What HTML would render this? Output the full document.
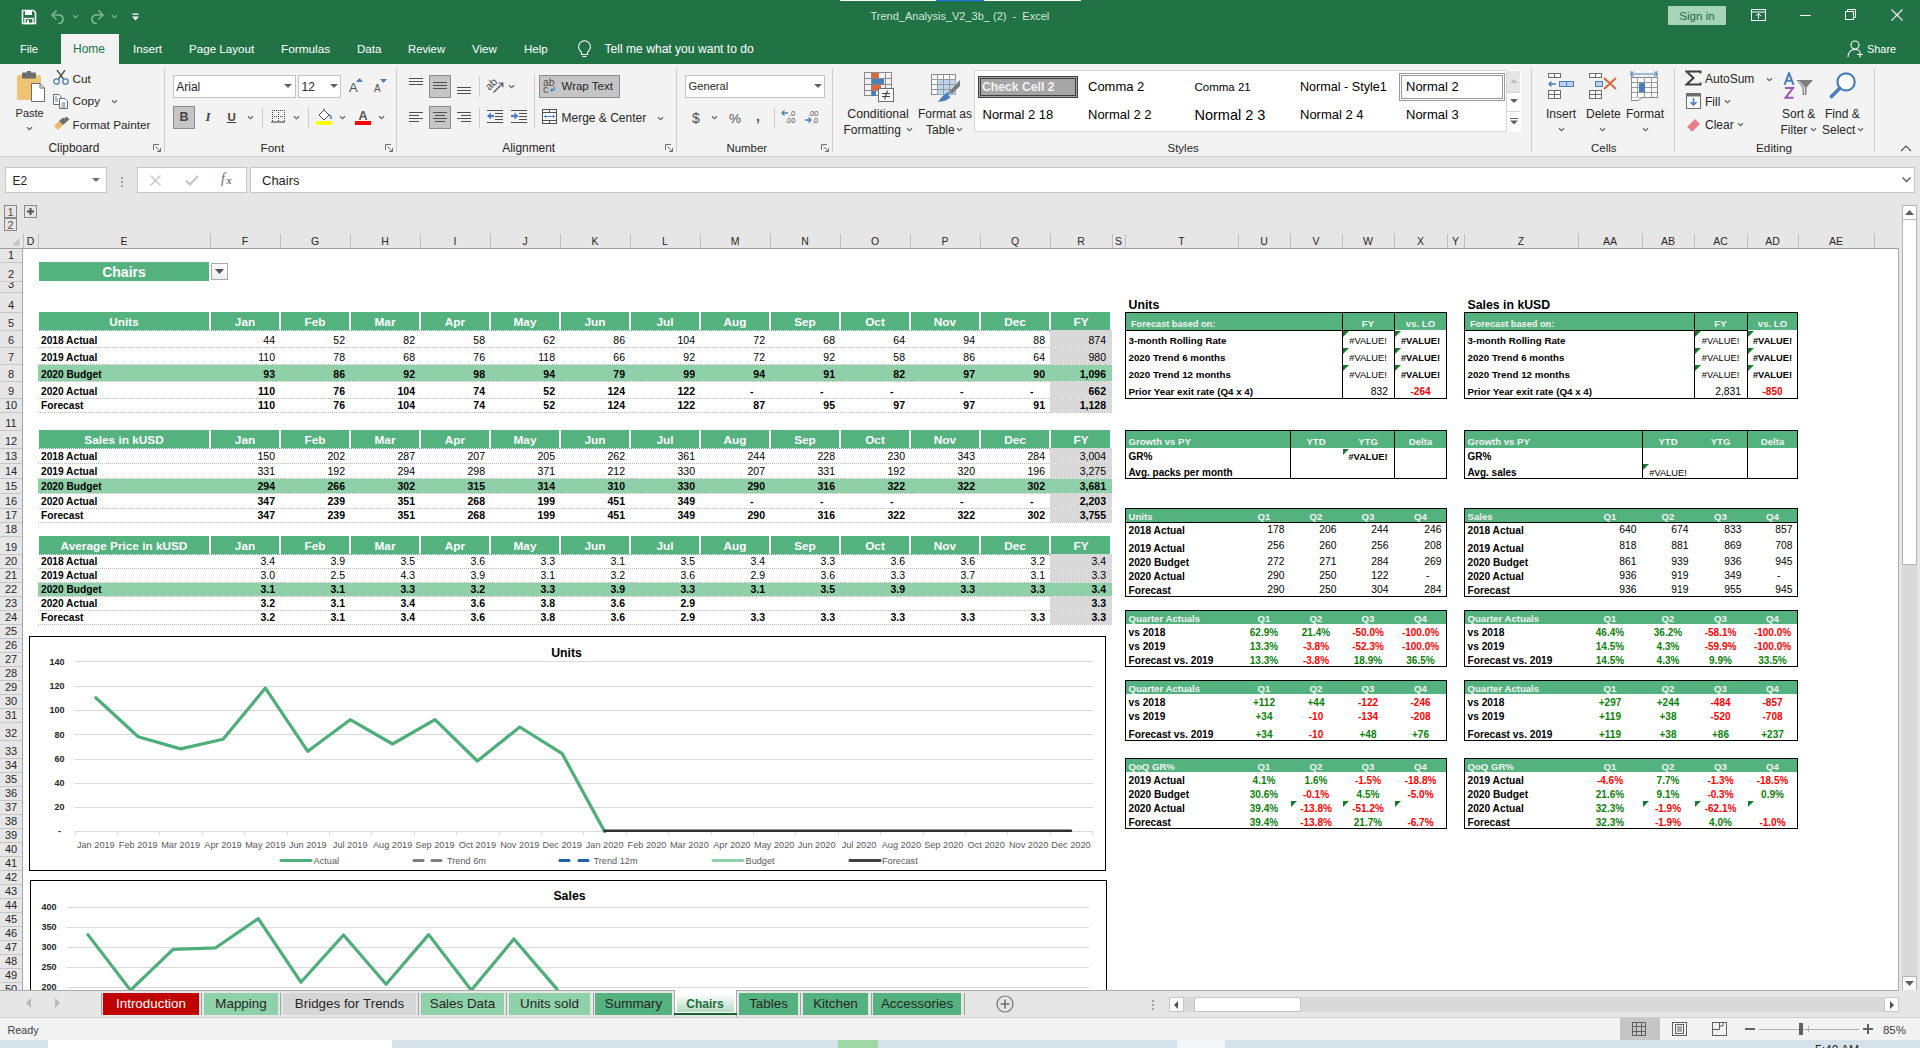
<!DOCTYPE html><html><head><meta charset="utf-8"><style>
*{margin:0;padding:0;box-sizing:border-box}
html,body{width:1920px;height:1048px;overflow:hidden;background:#fff;font-family:"Liberation Sans", sans-serif;}
body>div,body>svg,div>div{position:absolute}
</style></head><body>
<div style="left:0px;top:0px;width:1920px;height:64px;background:#217346"></div>
<div style="left:840px;top:0px;width:241px;height:1px;background:#ffffff"></div>
<div style="left:936px;top:0px;width:48px;height:1px;background:#1a73e8"></div>
<svg style="left:21px;top:9px;" width="16" height="16" viewBox="0 0 16 16"><path d="M1.5 1.5 H12.5 L14.5 3.5 V14.5 H1.5 Z" fill="none" stroke="#fff" stroke-width="1.6"/><rect x="4" y="2" width="7" height="4" fill="#fff"/><rect x="4" y="9.5" width="8" height="5" fill="none" stroke="#fff" stroke-width="1.4"/><rect x="6" y="11" width="2" height="3" fill="#fff"/></svg>
<svg style="left:50px;top:9px;" width="16" height="15" viewBox="0 0 16 15"><path d="M3 6 H10 A4.5 4.5 0 0 1 10 14.5 H8" fill="none" stroke="#7db797" stroke-width="1.6"/><path d="M6.5 1.5 L2 6 L6.5 10.5" fill="none" stroke="#7db797" stroke-width="1.6"/></svg>
<svg style="left:71.5px;top:13.5px;" width="7.0" height="5.0" viewBox="0 0 7.0 5.0"><path d="M1 1.25 L3.5 3.75 L6.0 1.25" fill="none" stroke="#7db797" stroke-width="1.1"/></svg>
<svg style="left:89px;top:9px;" width="16" height="15" viewBox="0 0 16 15"><path d="M13 6 H6 A4.5 4.5 0 0 0 6 14.5 H8" fill="none" stroke="#7db797" stroke-width="1.6"/><path d="M9.5 1.5 L14 6 L9.5 10.5" fill="none" stroke="#7db797" stroke-width="1.6"/></svg>
<svg style="left:110.5px;top:13.5px;" width="7.0" height="5.0" viewBox="0 0 7.0 5.0"><path d="M1 1.25 L3.5 3.75 L6.0 1.25" fill="none" stroke="#7db797" stroke-width="1.1"/></svg>
<svg style="left:132px;top:13px;" width="8" height="9" viewBox="0 0 8 9"><rect x="0.5" y="0.5" width="6" height="1.3" fill="#fff"/><path d="M0 3.5 H7 L3.5 7.5 Z" fill="#fff"/></svg>
<div style="left:870.5px;top:10px;font-size:11px;line-height:12px;font-weight:400;color:#d3e8da;white-space:nowrap;">Trend_Analysis_V2_3b_ (2)&nbsp; -&nbsp; Excel</div>
<div style="left:1668px;top:6px;width:58px;height:19px;background:#a7d3b8;border-radius:1px"></div>
<div style="left:1397.0px;width:600px;text-align:center;top:10px;font-size:11.6px;line-height:12px;font-weight:400;color:#1e6b41;white-space:nowrap;">Sign in</div>
<svg style="left:1751px;top:9px;" width="16" height="13" viewBox="0 0 16 13"><rect x="0.5" y="0.5" width="14" height="11" fill="none" stroke="#fff" stroke-width="1"/><path d="M0.5 3 H14.5" stroke="#fff" stroke-width="1"/><path d="M7.5 10 V4.5 M5 7 L7.5 4.5 L10 7" fill="none" stroke="#fff" stroke-width="1"/></svg>
<div style="left:1800px;top:15px;width:11px;height:1px;background:#fff"></div>
<svg style="left:1845px;top:9px;" width="12" height="12" viewBox="0 0 12 12"><rect x="0.5" y="2.5" width="8" height="8" fill="none" stroke="#fff" stroke-width="1"/><path d="M2.5 2.5 V0.5 H10.5 V8.5 H8.5" fill="none" stroke="#fff" stroke-width="1"/></svg>
<svg style="left:1891px;top:9px;" width="12" height="12" viewBox="0 0 12 12"><path d="M0.5 0.5 L11.5 11.5 M11.5 0.5 L0.5 11.5" stroke="#fff" stroke-width="1.1"/></svg>
<div style="left:61px;top:34px;width:58px;height:30px;background:#f3f3f3"></div>
<div style="left:20px;top:43px;font-size:11.2px;line-height:12px;font-weight:400;color:#ffffff;white-space:nowrap;">File</div>
<div style="left:73px;top:42px;font-size:12px;line-height:14px;font-weight:400;color:#217346;white-space:nowrap;">Home</div>
<div style="left:133px;top:43px;font-size:11.6px;line-height:12px;font-weight:400;color:#ffffff;white-space:nowrap;">Insert</div>
<div style="left:189px;top:43px;font-size:11.6px;line-height:12px;font-weight:400;color:#ffffff;white-space:nowrap;">Page Layout</div>
<div style="left:281px;top:42px;font-size:11.8px;line-height:14px;font-weight:400;color:#ffffff;white-space:nowrap;">Formulas</div>
<div style="left:357px;top:43px;font-size:11.6px;line-height:12px;font-weight:400;color:#ffffff;white-space:nowrap;">Data</div>
<div style="left:408px;top:43px;font-size:11.3px;line-height:12px;font-weight:400;color:#ffffff;white-space:nowrap;">Review</div>
<div style="left:472px;top:43px;font-size:11.5px;line-height:12px;font-weight:400;color:#ffffff;white-space:nowrap;">View</div>
<div style="left:524px;top:43px;font-size:11.5px;line-height:12px;font-weight:400;color:#ffffff;white-space:nowrap;">Help</div>
<svg style="left:577px;top:40px;" width="15" height="18" viewBox="0 0 15 18"><path d="M4.5 12.5 C3 10.5 1.5 9 1.5 6.8 A6 6 0 0 1 13.5 6.8 C13.5 9 12 10.5 10.5 12.5 V14.5 H4.5 Z" fill="none" stroke="#fff" stroke-width="1.1"/><path d="M5.5 16.5 H9.5" stroke="#fff" stroke-width="1.1"/></svg>
<div style="left:604.5px;top:42px;font-size:12.1px;line-height:14px;font-weight:400;color:#ffffff;white-space:nowrap;">Tell me what you want to do</div>
<svg style="left:1847px;top:40px;" width="17" height="18" viewBox="0 0 17 18"><circle cx="8" cy="5" r="4" fill="none" stroke="#fff" stroke-width="1.1"/><path d="M1 17 C1.5 11 4 9.5 8 9.5 C10 9.5 11.5 10 12.5 11" fill="none" stroke="#fff" stroke-width="1.1"/><path d="M13 11.5 V17.5 M10 14.5 H16" stroke="#fff" stroke-width="1.1"/></svg>
<div style="left:1867px;top:43px;font-size:10.9px;line-height:12px;font-weight:400;color:#ffffff;white-space:nowrap;">Share</div>
<div style="left:0px;top:64px;width:1920px;height:92px;background:#f3f3f3"></div>
<div style="left:0px;top:156px;width:1920px;height:1px;background:#d4d4d4"></div>
<svg style="left:15px;top:71px;" width="31" height="32" viewBox="0 0 31 32"><rect x="2" y="4" width="24" height="25" rx="2" fill="#eec376"/><rect x="7" y="1.5" width="14" height="6" rx="1" fill="#6d6d6d"/><rect x="12" y="0" width="4" height="3" fill="#6d6d6d"/><path d="M16.5 12.5 H25 L29.5 17 V30.5 H16.5 Z" fill="#fff" stroke="#6d6d6d" stroke-width="1"/><path d="M25 12.5 V17 H29.5" fill="none" stroke="#6d6d6d" stroke-width="1"/></svg>
<div style="left:15.6px;top:107px;font-size:11.0px;line-height:12px;font-weight:400;color:#262626;white-space:nowrap;">Paste</div>
<svg style="left:25.5px;top:125.5px;" width="7.0" height="5.0" viewBox="0 0 7.0 5.0"><path d="M1 1.25 L3.5 3.75 L6.0 1.25" fill="none" stroke="#606060" stroke-width="1.1"/></svg>
<svg style="left:53px;top:70px;" width="16" height="15" viewBox="0 0 16 15"><path d="M4 0 L10.5 9 M12 0 L5.5 9" stroke="#505050" stroke-width="1.4"/><circle cx="3.5" cy="11.5" r="2.7" fill="none" stroke="#4a7ebb" stroke-width="1.3"/><circle cx="12.5" cy="11.5" r="2.7" fill="none" stroke="#4a7ebb" stroke-width="1.3"/></svg>
<div style="left:72.5px;top:72px;font-size:11.8px;line-height:14px;font-weight:400;color:#262626;white-space:nowrap;">Cut</div>
<svg style="left:53px;top:94px;" width="16" height="15" viewBox="0 0 16 15"><path d="M0.5 0.5 H6 L8 2.5 V10.5 H0.5 Z" fill="#fff" stroke="#6d6d6d" stroke-width="1"/><path d="M6.5 4.5 H12 L14.5 7 V14.5 H6.5 Z" fill="#fff" stroke="#6d6d6d" stroke-width="1"/><path d="M2 3 H4 M2 5 H5 M2 7 H5 M8.5 9 H12.5 M8.5 11 H12.5 M8.5 13 H12.5" stroke="#4a7ebb" stroke-width="1"/></svg>
<div style="left:72.5px;top:94px;font-size:11.8px;line-height:14px;font-weight:400;color:#262626;white-space:nowrap;">Copy</div>
<svg style="left:110.5px;top:98.5px;" width="7.0" height="5.0" viewBox="0 0 7.0 5.0"><path d="M1 1.25 L3.5 3.75 L6.0 1.25" fill="none" stroke="#606060" stroke-width="1.1"/></svg>
<svg style="left:53px;top:117px;" width="17" height="14" viewBox="0 0 17 14"><path d="M1 9 L6 4 L10 8 L5 13 Z" fill="#e8b96a"/><path d="M6 4 L10 0.5 L14 4.5 L10 8 Z" fill="#6d6d6d"/><path d="M11 1.5 L13.5 -0.5 L16.5 2.5 L14 4.5 Z" fill="#6d6d6d"/></svg>
<div style="left:72.5px;top:118px;font-size:11.8px;line-height:14px;font-weight:400;color:#262626;white-space:nowrap;">Format Painter</div>
<div style="left:48.5px;top:141px;font-size:11.9px;line-height:14px;font-weight:400;color:#262626;white-space:nowrap;">Clipboard</div>
<svg style="left:153px;top:144px;" width="9" height="9" viewBox="0 0 9 9"><path d="M0.5 6 V0.5 H6" fill="none" stroke="#707070" stroke-width="1"/><path d="M2.5 2.5 L7.5 7.5 M4 7.5 H7.5 V4" fill="none" stroke="#707070" stroke-width="1"/></svg>
<div style="left:164px;top:68px;width:1px;height:84px;background:#cfcfcf"></div>
<div style="left:173px;top:75px;width:123px;height:23px;background:#fff;border:1px solid #c2c2c2"></div>
<div style="left:176.25px;top:80px;font-size:12px;line-height:14px;font-weight:400;color:#262626;white-space:nowrap;">Arial</div>
<svg style="left:284px;top:84px;" width="8" height="5" viewBox="0 0 8 5"><path d="M0 0 L8 0 L4 4 Z" fill="#606060"/></svg>
<div style="left:298px;top:75px;width:43px;height:23px;background:#fff;border:1px solid #c2c2c2"></div>
<div style="left:301.5px;top:80px;font-size:12px;line-height:14px;font-weight:400;color:#262626;white-space:nowrap;">12</div>
<svg style="left:329.5px;top:84px;" width="8" height="5" viewBox="0 0 8 5"><path d="M0 0 L8 0 L4 4 Z" fill="#606060"/></svg>
<div style="left:349px;top:80px;font-size:13px;line-height:15px;font-weight:400;color:#505050;white-space:nowrap;">A</div>
<svg style="left:356px;top:78px;" width="7" height="4" viewBox="0 0 7 4"><path d="M0 4 L3.5 0 L7 4 Z" fill="#4a7ebb"/></svg>
<div style="left:374px;top:83px;font-size:10px;line-height:11px;font-weight:400;color:#505050;white-space:nowrap;">A</div>
<svg style="left:380px;top:79px;" width="7" height="4" viewBox="0 0 7 4"><path d="M0 0 L7 0 L3.5 4 Z" fill="#4a7ebb"/></svg>
<div style="left:173px;top:106px;width:22px;height:23px;background:#c5c5c5;border:1px solid #8c8c8c"></div>
<div style="left:-116.0px;width:600px;text-align:center;top:110px;font-size:12.5px;line-height:14px;font-weight:700;color:#454545;white-space:nowrap;">B</div>
<div style="left:205.5px;top:109px;font-size:13px;line-height:15px;font-weight:700;color:#454545;white-space:nowrap;font-style:italic;font-family:'Liberation Serif',serif">I</div>
<div style="left:227.5px;top:111px;font-size:11.5px;line-height:12px;font-weight:700;color:#454545;white-space:nowrap;">U</div>
<div style="left:227px;top:122px;width:9px;height:1px;background:#404040"></div>
<svg style="left:246.5px;top:114.5px;" width="7.0" height="5.0" viewBox="0 0 7.0 5.0"><path d="M1 1.25 L3.5 3.75 L6.0 1.25" fill="none" stroke="#606060" stroke-width="1.1"/></svg>
<div style="left:262px;top:107px;width:1px;height:21px;background:#cfcfcf"></div>
<svg style="left:271px;top:109px;" width="14" height="14" viewBox="0 0 14 14"><path d="M1 1.5 H14 M1 7.5 H14 M1.5 1 V12 M7.5 1 V12 M13.5 1 V12" fill="none" stroke="#404040" stroke-width="1" stroke-dasharray="1 1"/><path d="M0 13 H14" stroke="#505050" stroke-width="1.2"/></svg>
<svg style="left:292.5px;top:114.5px;" width="7.0" height="5.0" viewBox="0 0 7.0 5.0"><path d="M1 1.25 L3.5 3.75 L6.0 1.25" fill="none" stroke="#606060" stroke-width="1.1"/></svg>
<div style="left:308px;top:107px;width:1px;height:21px;background:#cfcfcf"></div>
<svg style="left:316px;top:108px;" width="17" height="17" viewBox="0 0 17 17"><path d="M3 7 L8 2 L13 7 L8 12 Z" fill="#fff" stroke="#505050" stroke-width="1"/><path d="M8 2 V0.5" stroke="#505050"/><path d="M13 7 C15 8 15.5 10 15 11" fill="none" stroke="#4a7ebb" stroke-width="1.6"/><rect x="0" y="13" width="16" height="4" fill="#ffff00"/></svg>
<svg style="left:338.5px;top:114.5px;" width="7.0" height="5.0" viewBox="0 0 7.0 5.0"><path d="M1 1.25 L3.5 3.75 L6.0 1.25" fill="none" stroke="#606060" stroke-width="1.1"/></svg>
<div style="left:358.5px;top:109px;font-size:12.5px;line-height:14px;font-weight:700;color:#555555;white-space:nowrap;">A</div>
<div style="left:355px;top:121px;width:16px;height:4px;background:#ff0000"></div>
<svg style="left:377.5px;top:114.5px;" width="7.0" height="5.0" viewBox="0 0 7.0 5.0"><path d="M1 1.25 L3.5 3.75 L6.0 1.25" fill="none" stroke="#606060" stroke-width="1.1"/></svg>
<div style="left:260.6px;top:141px;font-size:11.8px;line-height:14px;font-weight:400;color:#262626;white-space:nowrap;">Font</div>
<svg style="left:385px;top:144px;" width="9" height="9" viewBox="0 0 9 9"><path d="M0.5 6 V0.5 H6" fill="none" stroke="#707070" stroke-width="1"/><path d="M2.5 2.5 L7.5 7.5 M4 7.5 H7.5 V4" fill="none" stroke="#707070" stroke-width="1"/></svg>
<div style="left:396px;top:68px;width:1px;height:84px;background:#cfcfcf"></div>
<div style="left:409px;top:78px;width:14px;height:1px;background:#505050"></div>
<div style="left:409px;top:81px;width:14px;height:1px;background:#505050"></div>
<div style="left:409px;top:84px;width:14px;height:1px;background:#505050"></div>
<div style="left:429px;top:75px;width:22px;height:23px;background:#c5c5c5;border:1px solid #8c8c8c"></div>
<div style="left:433px;top:82px;width:14px;height:1px;background:#505050"></div>
<div style="left:433px;top:85px;width:14px;height:1px;background:#505050"></div>
<div style="left:433px;top:88px;width:14px;height:1px;background:#505050"></div>
<div style="left:457px;top:87px;width:14px;height:1px;background:#505050"></div>
<div style="left:457px;top:90px;width:14px;height:1px;background:#505050"></div>
<div style="left:457px;top:93px;width:14px;height:1px;background:#505050"></div>
<div style="left:409px;top:112px;width:14px;height:1px;background:#505050"></div>
<div style="left:409px;top:115px;width:10px;height:1px;background:#505050"></div>
<div style="left:409px;top:118px;width:14px;height:1px;background:#505050"></div>
<div style="left:409px;top:121px;width:10px;height:1px;background:#505050"></div>
<div style="left:429px;top:106px;width:22px;height:23px;background:#c5c5c5;border:1px solid #8c8c8c"></div>
<div style="left:433px;top:112px;width:14px;height:1px;background:#505050"></div>
<div style="left:435px;top:115px;width:10px;height:1px;background:#505050"></div>
<div style="left:433px;top:118px;width:14px;height:1px;background:#505050"></div>
<div style="left:435px;top:121px;width:10px;height:1px;background:#505050"></div>
<div style="left:457px;top:112px;width:14px;height:1px;background:#505050"></div>
<div style="left:461px;top:115px;width:10px;height:1px;background:#505050"></div>
<div style="left:457px;top:118px;width:14px;height:1px;background:#505050"></div>
<div style="left:461px;top:121px;width:10px;height:1px;background:#505050"></div>
<div style="left:479px;top:76px;width:1px;height:21px;background:#cfcfcf"></div>
<div style="left:479px;top:107px;width:1px;height:21px;background:#cfcfcf"></div>
<svg style="left:485px;top:76px;" width="20" height="19" viewBox="0 0 20 19"><text x="0" y="0" font-size="11" fill="#505050" font-family="Liberation Sans" transform="translate(4.5 15) rotate(-45)">ab</text><path d="M8.5 16.5 L17.5 7.5 M13.5 7 H17.8 V11.3" fill="none" stroke="#505050" stroke-width="1.2"/></svg>
<svg style="left:507.5px;top:83.5px;" width="7.0" height="5.0" viewBox="0 0 7.0 5.0"><path d="M1 1.25 L3.5 3.75 L6.0 1.25" fill="none" stroke="#606060" stroke-width="1.1"/></svg>
<svg style="left:487px;top:110px;" width="17" height="14" viewBox="0 0 17 14"><path d="M0 0.5 H16 M8 3.5 H16 M8 6.5 H16 M8 9.5 H16 M0 12.5 H16" stroke="#505050" stroke-width="1"/><path d="M0 6 L4 2.5 V9.5 Z" fill="#4a7ebb"/><path d="M3 6 H7" stroke="#4a7ebb" stroke-width="2.2"/></svg>
<svg style="left:511px;top:110px;" width="17" height="14" viewBox="0 0 17 14"><path d="M0 0.5 H16 M8 3.5 H16 M8 6.5 H16 M8 9.5 H16 M0 12.5 H16" stroke="#505050" stroke-width="1"/><path d="M7.5 6 L3.5 2.5 V9.5 Z" fill="#4a7ebb"/><path d="M0 6 H4" stroke="#4a7ebb" stroke-width="2.2"/></svg>
<div style="left:534px;top:74px;width:1px;height:55px;background:#cfcfcf"></div>
<div style="left:539px;top:75px;width:81px;height:23px;background:#c5c5c5;border:1px solid #8c8c8c"></div>
<svg style="left:543px;top:76px;" width="14" height="18" viewBox="0 0 14 18"><text x="0" y="9.5" font-size="10.5" fill="#505050" font-family="Liberation Sans">ab</text><text x="0" y="17" font-size="10.5" fill="#505050" font-family="Liberation Sans">c</text><path d="M11.5 11 V14 H8 M9.5 12.5 L8 14 L9.5 15.5" fill="none" stroke="#4a7ebb" stroke-width="1.2"/></svg>
<div style="left:561.5px;top:80px;font-size:11.5px;line-height:12px;font-weight:400;color:#262626;white-space:nowrap;">Wrap Text</div>
<svg style="left:542px;top:109px;" width="15" height="15" viewBox="0 0 15 15"><rect x="0.5" y="0.5" width="14" height="14" fill="#fff" stroke="#505050" stroke-width="1"/><path d="M0.5 3.5 H14.5 M0.5 11.5 H14.5 M7.5 0.5 V3.5 M7.5 11.5 V14.5" stroke="#505050" stroke-width="1"/><path d="M2.5 7.5 H12.5 M4 6 L2.5 7.5 L4 9 M11 6 L12.5 7.5 L11 9" fill="none" stroke="#4a7ebb" stroke-width="1"/></svg>
<div style="left:561.5px;top:111px;font-size:12px;line-height:14px;font-weight:400;color:#262626;white-space:nowrap;">Merge &amp; Center</div>
<svg style="left:656.5px;top:115.5px;" width="7.0" height="5.0" viewBox="0 0 7.0 5.0"><path d="M1 1.25 L3.5 3.75 L6.0 1.25" fill="none" stroke="#606060" stroke-width="1.1"/></svg>
<div style="left:502.25px;top:141px;font-size:11.9px;line-height:14px;font-weight:400;color:#262626;white-space:nowrap;">Alignment</div>
<svg style="left:665px;top:144px;" width="9" height="9" viewBox="0 0 9 9"><path d="M0.5 6 V0.5 H6" fill="none" stroke="#707070" stroke-width="1"/><path d="M2.5 2.5 L7.5 7.5 M4 7.5 H7.5 V4" fill="none" stroke="#707070" stroke-width="1"/></svg>
<div style="left:676px;top:68px;width:1px;height:84px;background:#cfcfcf"></div>
<div style="left:685px;top:75px;width:140px;height:23px;background:#fff;border:1px solid #c2c2c2"></div>
<div style="left:688.5px;top:80px;font-size:11.2px;line-height:12px;font-weight:400;color:#262626;white-space:nowrap;">General</div>
<svg style="left:813.5px;top:84px;" width="8" height="5" viewBox="0 0 8 5"><path d="M0 0 L8 0 L4 4 Z" fill="#606060"/></svg>
<div style="left:692px;top:110px;font-size:14px;line-height:16px;font-weight:400;color:#505050;white-space:nowrap;">$</div>
<svg style="left:710.5px;top:114.5px;" width="7.0" height="5.0" viewBox="0 0 7.0 5.0"><path d="M1 1.25 L3.5 3.75 L6.0 1.25" fill="none" stroke="#606060" stroke-width="1.1"/></svg>
<div style="left:729px;top:111px;font-size:13.5px;line-height:15px;font-weight:400;color:#505050;white-space:nowrap;">%</div>
<div style="left:756px;top:108px;font-size:14px;line-height:16px;font-weight:700;color:#505050;white-space:nowrap;">,</div>
<div style="left:774px;top:107px;width:1px;height:21px;background:#cfcfcf"></div>
<svg style="left:781px;top:109px;" width="17" height="15" viewBox="0 0 17 15"><path d="M1 4 H7 M3.5 1.5 L1 4 L3.5 6.5" fill="none" stroke="#4a7ebb" stroke-width="1.3"/><text x="8" y="7" font-size="7.5" fill="#505050" font-family="Liberation Sans">.0</text><text x="4" y="14" font-size="7.5" fill="#505050" font-family="Liberation Sans">.00</text></svg>
<svg style="left:804px;top:109px;" width="17" height="15" viewBox="0 0 17 15"><text x="4" y="7" font-size="7.5" fill="#505050" font-family="Liberation Sans">.00</text><path d="M1 11 H7 M4.5 8.5 L7 11 L4.5 13.5" fill="none" stroke="#4a7ebb" stroke-width="1.3"/><text x="8" y="14" font-size="7.5" fill="#505050" font-family="Liberation Sans">.0</text></svg>
<div style="left:726.5px;top:142px;font-size:11.4px;line-height:12px;font-weight:400;color:#262626;white-space:nowrap;">Number</div>
<svg style="left:821px;top:144px;" width="9" height="9" viewBox="0 0 9 9"><path d="M0.5 6 V0.5 H6" fill="none" stroke="#707070" stroke-width="1"/><path d="M2.5 2.5 L7.5 7.5 M4 7.5 H7.5 V4" fill="none" stroke="#707070" stroke-width="1"/></svg>
<div style="left:832px;top:68px;width:1px;height:84px;background:#cfcfcf"></div>
<svg style="left:863px;top:71px;" width="32" height="32" viewBox="0 0 32 32"><g fill="none" stroke="#8a8a8a" stroke-width="1"><rect x="1.5" y="1.5" width="27" height="23"/><path d="M1.5 7.5 H28.5 M1.5 13.5 H28.5 M1.5 19.5 H28.5 M8.5 1.5 V24.5 M15.5 1.5 V24.5 M22.5 1.5 V24.5"/></g><rect x="9" y="2" width="6" height="5" fill="#e0643c"/><rect x="9" y="8" width="12" height="5" fill="#4a7ebb"/><rect x="9" y="14" width="9" height="5" fill="#e0643c"/><rect x="9" y="20" width="4" height="5" fill="#4a7ebb"/><rect x="15.5" y="17.5" width="15" height="13" fill="#fff" stroke="#6d6d6d" stroke-width="1"/><path d="M19 22.5 H27 M19 25.5 H27 M21.5 28.5 L24.5 19.5" stroke="#404040" stroke-width="1.1" fill="none"/></svg>
<div style="left:847.25px;top:107px;font-size:12.3px;line-height:14px;font-weight:400;color:#262626;white-space:nowrap;">Conditional</div>
<div style="left:843.5px;top:123px;font-size:12.0px;line-height:14px;font-weight:400;color:#262626;white-space:nowrap;">Formatting</div>
<svg style="left:905.5px;top:126.5px;" width="7.0" height="5.0" viewBox="0 0 7.0 5.0"><path d="M1 1.25 L3.5 3.75 L6.0 1.25" fill="none" stroke="#606060" stroke-width="1.1"/></svg>
<svg style="left:930px;top:72px;" width="34" height="32" viewBox="0 0 34 32"><rect x="1.5" y="2.5" width="24" height="20" fill="#fff" stroke="#8a8a8a"/><rect x="7.5" y="7.5" width="18" height="15" fill="#bdd5ee"/><path d="M1.5 7.5 H25.5 M1.5 12.5 H25.5 M1.5 17.5 H25.5 M7.5 2.5 V22.5 M13.5 2.5 V22.5 M19.5 2.5 V22.5" stroke="#9a9a9a" stroke-width="1"/><path d="M30 8 L30 14 L22 22 L19.5 19.5 Z" fill="#7a7a7a"/><path d="M19 20 C15 21 11 26 8 29.5 C13 30 19 28 21 24 Z" fill="#4a7ebb"/><path d="M18.5 22.5 L21 24.5" stroke="#fff" stroke-width="1.2"/></svg>
<div style="left:918px;top:107px;font-size:12.0px;line-height:14px;font-weight:400;color:#262626;white-space:nowrap;">Format as</div>
<div style="left:926px;top:123px;font-size:12.0px;line-height:14px;font-weight:400;color:#262626;white-space:nowrap;">Table</div>
<svg style="left:956.0px;top:126.5px;" width="7.0" height="5.0" viewBox="0 0 7.0 5.0"><path d="M1 1.25 L3.5 3.75 L6.0 1.25" fill="none" stroke="#606060" stroke-width="1.1"/></svg>
<div style="left:974px;top:70px;width:547px;height:62px;background:#fff;border:1px solid #d6d6d6"></div>
<div style="left:978px;top:76px;width:100px;height:22px;background:#a5a5a5;border:3px double #3f3f3f"></div>
<div style="left:982px;top:80px;font-size:12.2px;line-height:14px;font-weight:700;color:#f2f2f2;white-space:nowrap;">Check Cell 2</div>
<div style="left:1088px;top:79px;font-size:13px;line-height:15px;font-weight:400;color:#000;white-space:nowrap;">Comma 2</div>
<div style="left:1194.5px;top:81px;font-size:11.5px;line-height:12px;font-weight:400;color:#000;white-space:nowrap;">Comma 21</div>
<div style="left:1300px;top:80px;font-size:12.6px;line-height:14px;font-weight:400;color:#000;white-space:nowrap;">Normal - Style1</div>
<div style="left:1399px;top:73px;width:106px;height:28px;background:#fff;border:3px double #9a9a9a"></div>
<div style="left:1406px;top:79px;font-size:13px;line-height:15px;font-weight:400;color:#000;white-space:nowrap;">Normal 2</div>
<div style="left:982.5px;top:107px;font-size:13px;line-height:15px;font-weight:400;color:#000;white-space:nowrap;">Normal 2 18</div>
<div style="left:1088px;top:107px;font-size:13px;line-height:15px;font-weight:400;color:#000;white-space:nowrap;">Normal 2 2</div>
<div style="left:1194.5px;top:107px;font-size:14.5px;line-height:16px;font-weight:400;color:#000;white-space:nowrap;">Normal 2 3</div>
<div style="left:1300px;top:107px;font-size:13px;line-height:15px;font-weight:400;color:#000;white-space:nowrap;">Normal 2 4</div>
<div style="left:1406px;top:107px;font-size:13px;line-height:15px;font-weight:400;color:#000;white-space:nowrap;">Normal 3</div>
<div style="left:1506px;top:70px;width:15px;height:62px;background:#fff;border-left:1px solid #d6d6d6"></div>
<div style="left:1507px;top:71px;width:13px;height:21px;background:#e6e6e6"></div>
<svg style="left:1510px;top:79px;" width="8" height="5" viewBox="0 0 8 5"><path d="M0 4 L4 0 L8 4 Z" fill="#c0c0c0"/></svg>
<div style="left:1507px;top:92px;width:13px;height:1px;background:#d6d6d6"></div>
<div style="left:1507px;top:111px;width:13px;height:1px;background:#d6d6d6"></div>
<svg style="left:1510px;top:99px;" width="8" height="5" viewBox="0 0 8 5"><path d="M0 0 L8 0 L4 4 Z" fill="#606060"/></svg>
<svg style="left:1510px;top:118px;" width="8" height="7" viewBox="0 0 8 7"><path d="M0 0.5 H8" stroke="#606060"/><path d="M0 2.5 L8 2.5 L4 6.5 Z" fill="#606060"/></svg>
<div style="left:1167.5px;top:142px;font-size:11.5px;line-height:12px;font-weight:400;color:#262626;white-space:nowrap;">Styles</div>
<div style="left:1531px;top:68px;width:1px;height:84px;background:#cfcfcf"></div>
<svg style="left:1547px;top:72px;" width="28" height="28" viewBox="0 0 28 28"><g fill="#fff" stroke="#6d6d6d" stroke-width="1"><rect x="1.5" y="1.5" width="6" height="4"/><rect x="7.5" y="1.5" width="6" height="4"/><rect x="1.5" y="18.5" width="6" height="4"/><rect x="7.5" y="18.5" width="6" height="4"/><rect x="1.5" y="22.5" width="6" height="4"/><rect x="7.5" y="22.5" width="6" height="4"/></g><g fill="#bcd3ea" stroke="#4a7ebb" stroke-width="1"><rect x="12.5" y="9.5" width="7" height="5"/><rect x="19.5" y="9.5" width="7" height="5"/></g><path d="M2 12 H9 M4.5 9.5 L2 12 L4.5 14.5" fill="none" stroke="#4a7ebb" stroke-width="1.4"/></svg>
<div style="left:1546px;top:107px;font-size:12.0px;line-height:14px;font-weight:400;color:#262626;white-space:nowrap;">Insert</div>
<svg style="left:1557.5px;top:126.5px;" width="7.0" height="5.0" viewBox="0 0 7.0 5.0"><path d="M1 1.25 L3.5 3.75 L6.0 1.25" fill="none" stroke="#606060" stroke-width="1.1"/></svg>
<svg style="left:1588px;top:72px;" width="32" height="28" viewBox="0 0 32 28"><g fill="#fff" stroke="#6d6d6d" stroke-width="1"><rect x="1.5" y="1.5" width="6" height="4"/><rect x="7.5" y="1.5" width="6" height="4"/><rect x="1.5" y="18.5" width="6" height="4"/><rect x="7.5" y="18.5" width="6" height="4"/><rect x="1.5" y="22.5" width="6" height="4"/><rect x="7.5" y="22.5" width="6" height="4"/></g><g fill="#bcd3ea" stroke="#4a7ebb" stroke-width="1"><rect x="7.5" y="9.5" width="7" height="5"/></g><path d="M16 6 L28 17 M28 6 L16 17" stroke="#e0643c" stroke-width="2"/></svg>
<div style="left:1586px;top:107px;font-size:12.0px;line-height:14px;font-weight:400;color:#262626;white-space:nowrap;">Delete</div>
<svg style="left:1598.5px;top:126.5px;" width="7.0" height="5.0" viewBox="0 0 7.0 5.0"><path d="M1 1.25 L3.5 3.75 L6.0 1.25" fill="none" stroke="#606060" stroke-width="1.1"/></svg>
<svg style="left:1630px;top:70px;" width="30" height="32" viewBox="0 0 30 32"><path d="M1 4 H27 M4 1.5 L1 4 L4 6.5 M24 1.5 L27 4 L24 6.5 M1 1 V7 M27 1 V7" fill="none" stroke="#4a7ebb" stroke-width="1"/><g fill="#fff" stroke="#8a8a8a" stroke-width="1"><rect x="1.5" y="7.5" width="26" height="20"/></g><path d="M1.5 12.5 H27.5 M1.5 17.5 H27.5 M1.5 22.5 H27.5 M7.5 7.5 V27.5 M14.5 7.5 V27.5 M21.5 7.5 V27.5" stroke="#9a9a9a" stroke-width="1"/><rect x="9" y="13" width="6" height="9" fill="#4a7ebb"/><path d="M1.5 27.5 V30.5 H8 L12 27.5" fill="#fff" stroke="#8a8a8a"/></svg>
<div style="left:1626px;top:107px;font-size:12.0px;line-height:14px;font-weight:400;color:#262626;white-space:nowrap;">Format</div>
<svg style="left:1641.5px;top:126.5px;" width="7.0" height="5.0" viewBox="0 0 7.0 5.0"><path d="M1 1.25 L3.5 3.75 L6.0 1.25" fill="none" stroke="#606060" stroke-width="1.1"/></svg>
<div style="left:1591px;top:142px;font-size:11.5px;line-height:12px;font-weight:400;color:#262626;white-space:nowrap;">Cells</div>
<div style="left:1674px;top:68px;width:1px;height:84px;background:#cfcfcf"></div>
<svg style="left:1685px;top:70px;" width="17" height="16" viewBox="0 0 17 16"><path d="M15.5 3.5 V1.5 H1.5 L8.5 8 L1.5 14.5 H15.5 V12.5" fill="none" stroke="#404040" stroke-width="2"/></svg>
<div style="left:1705px;top:72px;font-size:12.0px;line-height:14px;font-weight:400;color:#262626;white-space:nowrap;">AutoSum</div>
<svg style="left:1765.5px;top:76.5px;" width="7.0" height="5.0" viewBox="0 0 7.0 5.0"><path d="M1 1.25 L3.5 3.75 L6.0 1.25" fill="none" stroke="#606060" stroke-width="1.1"/></svg>
<svg style="left:1686px;top:93px;" width="15" height="16" viewBox="0 0 15 16"><rect x="0.5" y="0.5" width="14" height="15" fill="#fff" stroke="#6d6d6d"/><rect x="0.5" y="0.5" width="14" height="3" fill="#6d6d6d"/><path d="M7.5 5 V12 M4.5 9 L7.5 12 L10.5 9" fill="none" stroke="#4a7ebb" stroke-width="1.6"/></svg>
<div style="left:1705px;top:95px;font-size:12.0px;line-height:14px;font-weight:400;color:#262626;white-space:nowrap;">Fill</div>
<svg style="left:1723.5px;top:98.5px;" width="7.0" height="5.0" viewBox="0 0 7.0 5.0"><path d="M1 1.25 L3.5 3.75 L6.0 1.25" fill="none" stroke="#606060" stroke-width="1.1"/></svg>
<svg style="left:1686px;top:117px;" width="15" height="14" viewBox="0 0 15 14"><path d="M1 10 L9 2 L14 7 L6 15 Z" fill="#e77f8c"/><path d="M1 10 L4 13" stroke="#f3f3f3" stroke-width="1"/></svg>
<div style="left:1705px;top:118px;font-size:12.0px;line-height:14px;font-weight:400;color:#262626;white-space:nowrap;">Clear</div>
<svg style="left:1736.5px;top:121.5px;" width="7.0" height="5.0" viewBox="0 0 7.0 5.0"><path d="M1 1.25 L3.5 3.75 L6.0 1.25" fill="none" stroke="#606060" stroke-width="1.1"/></svg>
<svg style="left:1782px;top:72px;" width="33" height="30" viewBox="0 0 33 30"><path d="M2.5 12.8 L7 1.2 L11.5 12.8 M4.3 8.8 H9.7" fill="none" stroke="#4a7ebb" stroke-width="2"/><path d="M3 16 H11 L3.5 25.8 H11.5" fill="none" stroke="#9b59b6" stroke-width="2"/><path d="M14.5 8 H31 L24.5 15.5 V22.8 H20.5 V15.5 Z" fill="#7f7f7f"/><path d="M16.8 9.2 L22.3 15 V21.8" fill="none" stroke="#fff" stroke-width="1"/></svg>
<div style="left:1782px;top:107px;font-size:12.0px;line-height:14px;font-weight:400;color:#262626;white-space:nowrap;">Sort &amp;</div>
<div style="left:1780.5px;top:123px;font-size:12.0px;line-height:14px;font-weight:400;color:#262626;white-space:nowrap;">Filter</div>
<svg style="left:1809.5px;top:126.5px;" width="7.0" height="5.0" viewBox="0 0 7.0 5.0"><path d="M1 1.25 L3.5 3.75 L6.0 1.25" fill="none" stroke="#606060" stroke-width="1.1"/></svg>
<svg style="left:1828px;top:71px;" width="30" height="32" viewBox="0 0 30 32"><circle cx="18.1" cy="10.9" r="8.6" fill="#fff" stroke="#4a7ebb" stroke-width="2.2"/><path d="M11.5 17.5 L3.5 25.5" stroke="#4a7ebb" stroke-width="3.6" stroke-linecap="round"/></svg>
<div style="left:1825px;top:107px;font-size:12.0px;line-height:14px;font-weight:400;color:#262626;white-space:nowrap;">Find &amp;</div>
<div style="left:1822px;top:123px;font-size:12.0px;line-height:14px;font-weight:400;color:#262626;white-space:nowrap;">Select</div>
<svg style="left:1856.5px;top:126.5px;" width="7.0" height="5.0" viewBox="0 0 7.0 5.0"><path d="M1 1.25 L3.5 3.75 L6.0 1.25" fill="none" stroke="#606060" stroke-width="1.1"/></svg>
<div style="left:1756px;top:141px;font-size:11.8px;line-height:14px;font-weight:400;color:#262626;white-space:nowrap;">Editing</div>
<div style="left:1874px;top:68px;width:1px;height:84px;background:#cfcfcf"></div>
<svg style="left:1900px;top:145px;" width="12" height="7" viewBox="0 0 12 7"><path d="M1 6 L6 1 L11 6" fill="none" stroke="#505050" stroke-width="1.1"/></svg>
<div style="left:0px;top:157px;width:1920px;height:91px;background:#e6e6e6"></div>
<div style="left:5px;top:167px;width:102px;height:26px;background:#fff;border:1px solid #c6c6c6"></div>
<div style="left:12.5px;top:174px;font-size:12px;line-height:14px;font-weight:400;color:#262626;white-space:nowrap;">E2</div>
<svg style="left:92px;top:178px;" width="8" height="5" viewBox="0 0 8 5"><path d="M0 0 L8 0 L4 4 Z" fill="#707070"/></svg>
<div style="left:121px;top:177px;width:2px;height:2px;background:#a0a0a0"></div>
<div style="left:121px;top:181px;width:2px;height:2px;background:#a0a0a0"></div>
<div style="left:121px;top:185px;width:2px;height:2px;background:#a0a0a0"></div>
<div style="left:137px;top:167px;width:110px;height:26px;background:#fff;border:1px solid #c6c6c6"></div>
<svg style="left:150px;top:175px;" width="11" height="11" viewBox="0 0 11 11"><path d="M0.5 0.5 L10.5 10.5 M10.5 0.5 L0.5 10.5" stroke="#c4c4c4" stroke-width="1.4"/></svg>
<svg style="left:185px;top:175px;" width="14" height="11" viewBox="0 0 14 11"><path d="M1 5.5 L5 9.5 L13 1" fill="none" stroke="#c4c4c4" stroke-width="2.2"/></svg>
<div style="left:221px;top:171px;font-size:14px;line-height:16px;font-weight:400;color:#6a6a6a;white-space:nowrap;font-style:italic;font-family:'Liberation Serif',serif">f</div>
<div style="left:226.5px;top:175px;font-size:10px;line-height:11px;font-weight:700;color:#6a6a6a;white-space:nowrap;font-style:italic;font-family:'Liberation Serif',serif">x</div>
<div style="left:250px;top:167px;width:1665px;height:26px;background:#fff;border:1px solid #c6c6c6"></div>
<div style="left:262px;top:173px;font-size:13px;line-height:15px;font-weight:400;color:#262626;white-space:nowrap;">Chairs</div>
<svg style="left:1902px;top:177px;" width="9" height="6" viewBox="0 0 9 6"><path d="M0.5 0.5 L4.5 4.5 L8.5 0.5" fill="none" stroke="#606060" stroke-width="1.4"/></svg>
<div style="left:4px;top:205px;width:13px;height:13px;border:1px solid #8a8a8a"></div>
<div style="left:-289.5px;width:600px;text-align:center;top:206px;font-size:11px;line-height:12px;font-weight:400;color:#505050;white-space:nowrap;">1</div>
<div style="left:4px;top:218px;width:13px;height:13px;border:1px solid #8a8a8a"></div>
<div style="left:-289.5px;width:600px;text-align:center;top:219px;font-size:11px;line-height:12px;font-weight:400;color:#505050;white-space:nowrap;">2</div>
<div style="left:24px;top:205px;width:13px;height:13px;border:1px solid #8a8a8a"></div>
<svg style="left:26px;top:207px;" width="9" height="9" viewBox="0 0 9 9"><path d="M4.5 1 V8 M1 4.5 H8" stroke="#505050" stroke-width="2"/></svg>
<div style="left:0px;top:248px;width:1899px;height:1px;background:#9e9e9e"></div>
<svg style="left:12px;top:238px;" width="8" height="8" viewBox="0 0 8 8"><path d="M7.5 0 V7.5 H0 Z" fill="#c4c4c4"/></svg>
<div style="left:23px;top:234px;width:1px;height:14px;background:#c0c0c0"></div>
<div style="left:-269.5px;width:600px;text-align:center;top:235px;font-size:10.5px;line-height:12px;font-weight:400;color:#262626;white-space:nowrap;">D</div>
<div style="left:38px;top:234px;width:1px;height:14px;background:#c0c0c0"></div>
<div style="left:-176.0px;width:600px;text-align:center;top:235px;font-size:10.5px;line-height:12px;font-weight:400;color:#262626;white-space:nowrap;">E</div>
<div style="left:210px;top:234px;width:1px;height:14px;background:#c0c0c0"></div>
<div style="left:-55.0px;width:600px;text-align:center;top:235px;font-size:10.5px;line-height:12px;font-weight:400;color:#262626;white-space:nowrap;">F</div>
<div style="left:280px;top:234px;width:1px;height:14px;background:#c0c0c0"></div>
<div style="left:15.0px;width:600px;text-align:center;top:235px;font-size:10.5px;line-height:12px;font-weight:400;color:#262626;white-space:nowrap;">G</div>
<div style="left:350px;top:234px;width:1px;height:14px;background:#c0c0c0"></div>
<div style="left:85.0px;width:600px;text-align:center;top:235px;font-size:10.5px;line-height:12px;font-weight:400;color:#262626;white-space:nowrap;">H</div>
<div style="left:420px;top:234px;width:1px;height:14px;background:#c0c0c0"></div>
<div style="left:155.0px;width:600px;text-align:center;top:235px;font-size:10.5px;line-height:12px;font-weight:400;color:#262626;white-space:nowrap;">I</div>
<div style="left:490px;top:234px;width:1px;height:14px;background:#c0c0c0"></div>
<div style="left:225.0px;width:600px;text-align:center;top:235px;font-size:10.5px;line-height:12px;font-weight:400;color:#262626;white-space:nowrap;">J</div>
<div style="left:560px;top:234px;width:1px;height:14px;background:#c0c0c0"></div>
<div style="left:295.0px;width:600px;text-align:center;top:235px;font-size:10.5px;line-height:12px;font-weight:400;color:#262626;white-space:nowrap;">K</div>
<div style="left:630px;top:234px;width:1px;height:14px;background:#c0c0c0"></div>
<div style="left:365.0px;width:600px;text-align:center;top:235px;font-size:10.5px;line-height:12px;font-weight:400;color:#262626;white-space:nowrap;">L</div>
<div style="left:700px;top:234px;width:1px;height:14px;background:#c0c0c0"></div>
<div style="left:435.0px;width:600px;text-align:center;top:235px;font-size:10.5px;line-height:12px;font-weight:400;color:#262626;white-space:nowrap;">M</div>
<div style="left:770px;top:234px;width:1px;height:14px;background:#c0c0c0"></div>
<div style="left:505.0px;width:600px;text-align:center;top:235px;font-size:10.5px;line-height:12px;font-weight:400;color:#262626;white-space:nowrap;">N</div>
<div style="left:840px;top:234px;width:1px;height:14px;background:#c0c0c0"></div>
<div style="left:575.0px;width:600px;text-align:center;top:235px;font-size:10.5px;line-height:12px;font-weight:400;color:#262626;white-space:nowrap;">O</div>
<div style="left:910px;top:234px;width:1px;height:14px;background:#c0c0c0"></div>
<div style="left:645.0px;width:600px;text-align:center;top:235px;font-size:10.5px;line-height:12px;font-weight:400;color:#262626;white-space:nowrap;">P</div>
<div style="left:980px;top:234px;width:1px;height:14px;background:#c0c0c0"></div>
<div style="left:715.0px;width:600px;text-align:center;top:235px;font-size:10.5px;line-height:12px;font-weight:400;color:#262626;white-space:nowrap;">Q</div>
<div style="left:1050px;top:234px;width:1px;height:14px;background:#c0c0c0"></div>
<div style="left:781.0px;width:600px;text-align:center;top:235px;font-size:10.5px;line-height:12px;font-weight:400;color:#262626;white-space:nowrap;">R</div>
<div style="left:1112px;top:234px;width:1px;height:14px;background:#c0c0c0"></div>
<div style="left:818.5px;width:600px;text-align:center;top:235px;font-size:10.5px;line-height:12px;font-weight:400;color:#262626;white-space:nowrap;">S</div>
<div style="left:1125px;top:234px;width:1px;height:14px;background:#c0c0c0"></div>
<div style="left:881.5px;width:600px;text-align:center;top:235px;font-size:10.5px;line-height:12px;font-weight:400;color:#262626;white-space:nowrap;">T</div>
<div style="left:1238px;top:234px;width:1px;height:14px;background:#c0c0c0"></div>
<div style="left:964.0px;width:600px;text-align:center;top:235px;font-size:10.5px;line-height:12px;font-weight:400;color:#262626;white-space:nowrap;">U</div>
<div style="left:1290px;top:234px;width:1px;height:14px;background:#c0c0c0"></div>
<div style="left:1016.0px;width:600px;text-align:center;top:235px;font-size:10.5px;line-height:12px;font-weight:400;color:#262626;white-space:nowrap;">V</div>
<div style="left:1342px;top:234px;width:1px;height:14px;background:#c0c0c0"></div>
<div style="left:1068.0px;width:600px;text-align:center;top:235px;font-size:10.5px;line-height:12px;font-weight:400;color:#262626;white-space:nowrap;">W</div>
<div style="left:1394px;top:234px;width:1px;height:14px;background:#c0c0c0"></div>
<div style="left:1120.5px;width:600px;text-align:center;top:235px;font-size:10.5px;line-height:12px;font-weight:400;color:#262626;white-space:nowrap;">X</div>
<div style="left:1447px;top:234px;width:1px;height:14px;background:#c0c0c0"></div>
<div style="left:1155.5px;width:600px;text-align:center;top:235px;font-size:10.5px;line-height:12px;font-weight:400;color:#262626;white-space:nowrap;">Y</div>
<div style="left:1464px;top:234px;width:1px;height:14px;background:#c0c0c0"></div>
<div style="left:1221.0px;width:600px;text-align:center;top:235px;font-size:10.5px;line-height:12px;font-weight:400;color:#262626;white-space:nowrap;">Z</div>
<div style="left:1578px;top:234px;width:1px;height:14px;background:#c0c0c0"></div>
<div style="left:1310.0px;width:600px;text-align:center;top:235px;font-size:10.5px;line-height:12px;font-weight:400;color:#262626;white-space:nowrap;">AA</div>
<div style="left:1642px;top:234px;width:1px;height:14px;background:#c0c0c0"></div>
<div style="left:1368.0px;width:600px;text-align:center;top:235px;font-size:10.5px;line-height:12px;font-weight:400;color:#262626;white-space:nowrap;">AB</div>
<div style="left:1694px;top:234px;width:1px;height:14px;background:#c0c0c0"></div>
<div style="left:1420.5px;width:600px;text-align:center;top:235px;font-size:10.5px;line-height:12px;font-weight:400;color:#262626;white-space:nowrap;">AC</div>
<div style="left:1747px;top:234px;width:1px;height:14px;background:#c0c0c0"></div>
<div style="left:1472.5px;width:600px;text-align:center;top:235px;font-size:10.5px;line-height:12px;font-weight:400;color:#262626;white-space:nowrap;">AD</div>
<div style="left:1798px;top:234px;width:1px;height:14px;background:#c0c0c0"></div>
<div style="left:1536.0px;width:600px;text-align:center;top:235px;font-size:10.5px;line-height:12px;font-weight:400;color:#262626;white-space:nowrap;">AE</div>
<div style="left:1874px;top:234px;width:1px;height:14px;background:#c0c0c0"></div>
<div style="left:22px;top:248px;width:1px;height:742px;background:#a8a8a8"></div>
<div style="left:0px;top:249px;width:22px;height:741px;background:#e6e6e6"></div>
<div style="left:0px;top:262px;width:22px;height:1px;background:#c6c6c6"></div>
<div style="left:-289.0px;width:600px;text-align:center;top:249px;font-size:11px;line-height:12px;font-weight:400;color:#262626;white-space:nowrap;">1</div>
<div style="left:0px;top:281px;width:22px;height:1px;background:#c6c6c6"></div>
<div style="left:-289.0px;width:600px;text-align:center;top:268px;font-size:11px;line-height:12px;font-weight:400;color:#262626;white-space:nowrap;">2</div>
<div style="left:0px;top:292px;width:22px;height:1px;background:#c6c6c6"></div>
<div style="left:0;top:282px;width:22px;height:10px;overflow:hidden">
<div style="position:absolute;left:0;top:-282px;width:22px;height:400px">
<div style="left:-289.0px;width:600px;text-align:center;top:278px;font-size:11px;line-height:12px;font-weight:400;color:#262626;white-space:nowrap;">3</div>
</div></div>
<div style="left:0px;top:312px;width:22px;height:1px;background:#c6c6c6"></div>
<div style="left:-289.0px;width:600px;text-align:center;top:299px;font-size:11px;line-height:12px;font-weight:400;color:#262626;white-space:nowrap;">4</div>
<div style="left:0px;top:330px;width:22px;height:1px;background:#c6c6c6"></div>
<div style="left:-289.0px;width:600px;text-align:center;top:317px;font-size:11px;line-height:12px;font-weight:400;color:#262626;white-space:nowrap;">5</div>
<div style="left:0px;top:347px;width:22px;height:1px;background:#c6c6c6"></div>
<div style="left:-289.0px;width:600px;text-align:center;top:334px;font-size:11px;line-height:12px;font-weight:400;color:#262626;white-space:nowrap;">6</div>
<div style="left:0px;top:364px;width:22px;height:1px;background:#c6c6c6"></div>
<div style="left:-289.0px;width:600px;text-align:center;top:351px;font-size:11px;line-height:12px;font-weight:400;color:#262626;white-space:nowrap;">7</div>
<div style="left:0px;top:381px;width:22px;height:1px;background:#c6c6c6"></div>
<div style="left:-289.0px;width:600px;text-align:center;top:368px;font-size:11px;line-height:12px;font-weight:400;color:#262626;white-space:nowrap;">8</div>
<div style="left:0px;top:398px;width:22px;height:1px;background:#c6c6c6"></div>
<div style="left:-289.0px;width:600px;text-align:center;top:385px;font-size:11px;line-height:12px;font-weight:400;color:#262626;white-space:nowrap;">9</div>
<div style="left:0px;top:412px;width:22px;height:1px;background:#c6c6c6"></div>
<div style="left:-289.0px;width:600px;text-align:center;top:399px;font-size:11px;line-height:12px;font-weight:400;color:#262626;white-space:nowrap;">10</div>
<div style="left:0px;top:430px;width:22px;height:1px;background:#c6c6c6"></div>
<div style="left:-289.0px;width:600px;text-align:center;top:417px;font-size:11px;line-height:12px;font-weight:400;color:#262626;white-space:nowrap;">11</div>
<div style="left:0px;top:448px;width:22px;height:1px;background:#c6c6c6"></div>
<div style="left:-289.0px;width:600px;text-align:center;top:435px;font-size:11px;line-height:12px;font-weight:400;color:#262626;white-space:nowrap;">12</div>
<div style="left:0px;top:463px;width:22px;height:1px;background:#c6c6c6"></div>
<div style="left:-289.0px;width:600px;text-align:center;top:450px;font-size:11px;line-height:12px;font-weight:400;color:#262626;white-space:nowrap;">13</div>
<div style="left:0px;top:478px;width:22px;height:1px;background:#c6c6c6"></div>
<div style="left:-289.0px;width:600px;text-align:center;top:465px;font-size:11px;line-height:12px;font-weight:400;color:#262626;white-space:nowrap;">14</div>
<div style="left:0px;top:493px;width:22px;height:1px;background:#c6c6c6"></div>
<div style="left:-289.0px;width:600px;text-align:center;top:480px;font-size:11px;line-height:12px;font-weight:400;color:#262626;white-space:nowrap;">15</div>
<div style="left:0px;top:508px;width:22px;height:1px;background:#c6c6c6"></div>
<div style="left:-289.0px;width:600px;text-align:center;top:495px;font-size:11px;line-height:12px;font-weight:400;color:#262626;white-space:nowrap;">16</div>
<div style="left:0px;top:522px;width:22px;height:1px;background:#c6c6c6"></div>
<div style="left:-289.0px;width:600px;text-align:center;top:509px;font-size:11px;line-height:12px;font-weight:400;color:#262626;white-space:nowrap;">17</div>
<div style="left:0px;top:536px;width:22px;height:1px;background:#c6c6c6"></div>
<div style="left:-289.0px;width:600px;text-align:center;top:523px;font-size:11px;line-height:12px;font-weight:400;color:#262626;white-space:nowrap;">18</div>
<div style="left:0px;top:554px;width:22px;height:1px;background:#c6c6c6"></div>
<div style="left:-289.0px;width:600px;text-align:center;top:541px;font-size:11px;line-height:12px;font-weight:400;color:#262626;white-space:nowrap;">19</div>
<div style="left:0px;top:568px;width:22px;height:1px;background:#c6c6c6"></div>
<div style="left:-289.0px;width:600px;text-align:center;top:555px;font-size:11px;line-height:12px;font-weight:400;color:#262626;white-space:nowrap;">20</div>
<div style="left:0px;top:582px;width:22px;height:1px;background:#c6c6c6"></div>
<div style="left:-289.0px;width:600px;text-align:center;top:569px;font-size:11px;line-height:12px;font-weight:400;color:#262626;white-space:nowrap;">21</div>
<div style="left:0px;top:596px;width:22px;height:1px;background:#c6c6c6"></div>
<div style="left:-289.0px;width:600px;text-align:center;top:583px;font-size:11px;line-height:12px;font-weight:400;color:#262626;white-space:nowrap;">22</div>
<div style="left:0px;top:610px;width:22px;height:1px;background:#c6c6c6"></div>
<div style="left:-289.0px;width:600px;text-align:center;top:597px;font-size:11px;line-height:12px;font-weight:400;color:#262626;white-space:nowrap;">23</div>
<div style="left:0px;top:624px;width:22px;height:1px;background:#c6c6c6"></div>
<div style="left:-289.0px;width:600px;text-align:center;top:611px;font-size:11px;line-height:12px;font-weight:400;color:#262626;white-space:nowrap;">24</div>
<div style="left:0px;top:638px;width:22px;height:1px;background:#c6c6c6"></div>
<div style="left:-289.0px;width:600px;text-align:center;top:625px;font-size:11px;line-height:12px;font-weight:400;color:#262626;white-space:nowrap;">25</div>
<div style="left:0px;top:652px;width:22px;height:1px;background:#c6c6c6"></div>
<div style="left:-289.0px;width:600px;text-align:center;top:639px;font-size:11px;line-height:12px;font-weight:400;color:#262626;white-space:nowrap;">26</div>
<div style="left:0px;top:666px;width:22px;height:1px;background:#c6c6c6"></div>
<div style="left:-289.0px;width:600px;text-align:center;top:653px;font-size:11px;line-height:12px;font-weight:400;color:#262626;white-space:nowrap;">27</div>
<div style="left:0px;top:680px;width:22px;height:1px;background:#c6c6c6"></div>
<div style="left:-289.0px;width:600px;text-align:center;top:667px;font-size:11px;line-height:12px;font-weight:400;color:#262626;white-space:nowrap;">28</div>
<div style="left:0px;top:694px;width:22px;height:1px;background:#c6c6c6"></div>
<div style="left:-289.0px;width:600px;text-align:center;top:681px;font-size:11px;line-height:12px;font-weight:400;color:#262626;white-space:nowrap;">29</div>
<div style="left:0px;top:708px;width:22px;height:1px;background:#c6c6c6"></div>
<div style="left:-289.0px;width:600px;text-align:center;top:695px;font-size:11px;line-height:12px;font-weight:400;color:#262626;white-space:nowrap;">30</div>
<div style="left:0px;top:722px;width:22px;height:1px;background:#c6c6c6"></div>
<div style="left:-289.0px;width:600px;text-align:center;top:709px;font-size:11px;line-height:12px;font-weight:400;color:#262626;white-space:nowrap;">31</div>
<div style="left:0px;top:740px;width:22px;height:1px;background:#c6c6c6"></div>
<div style="left:-289.0px;width:600px;text-align:center;top:727px;font-size:11px;line-height:12px;font-weight:400;color:#262626;white-space:nowrap;">32</div>
<div style="left:0px;top:758px;width:22px;height:1px;background:#c6c6c6"></div>
<div style="left:-289.0px;width:600px;text-align:center;top:745px;font-size:11px;line-height:12px;font-weight:400;color:#262626;white-space:nowrap;">33</div>
<div style="left:0px;top:772px;width:22px;height:1px;background:#c6c6c6"></div>
<div style="left:-289.0px;width:600px;text-align:center;top:759px;font-size:11px;line-height:12px;font-weight:400;color:#262626;white-space:nowrap;">34</div>
<div style="left:0px;top:786px;width:22px;height:1px;background:#c6c6c6"></div>
<div style="left:-289.0px;width:600px;text-align:center;top:773px;font-size:11px;line-height:12px;font-weight:400;color:#262626;white-space:nowrap;">35</div>
<div style="left:0px;top:800px;width:22px;height:1px;background:#c6c6c6"></div>
<div style="left:-289.0px;width:600px;text-align:center;top:787px;font-size:11px;line-height:12px;font-weight:400;color:#262626;white-space:nowrap;">36</div>
<div style="left:0px;top:814px;width:22px;height:1px;background:#c6c6c6"></div>
<div style="left:-289.0px;width:600px;text-align:center;top:801px;font-size:11px;line-height:12px;font-weight:400;color:#262626;white-space:nowrap;">37</div>
<div style="left:0px;top:828px;width:22px;height:1px;background:#c6c6c6"></div>
<div style="left:-289.0px;width:600px;text-align:center;top:815px;font-size:11px;line-height:12px;font-weight:400;color:#262626;white-space:nowrap;">38</div>
<div style="left:0px;top:842px;width:22px;height:1px;background:#c6c6c6"></div>
<div style="left:-289.0px;width:600px;text-align:center;top:829px;font-size:11px;line-height:12px;font-weight:400;color:#262626;white-space:nowrap;">39</div>
<div style="left:0px;top:856px;width:22px;height:1px;background:#c6c6c6"></div>
<div style="left:-289.0px;width:600px;text-align:center;top:843px;font-size:11px;line-height:12px;font-weight:400;color:#262626;white-space:nowrap;">40</div>
<div style="left:0px;top:870px;width:22px;height:1px;background:#c6c6c6"></div>
<div style="left:-289.0px;width:600px;text-align:center;top:857px;font-size:11px;line-height:12px;font-weight:400;color:#262626;white-space:nowrap;">41</div>
<div style="left:0px;top:884px;width:22px;height:1px;background:#c6c6c6"></div>
<div style="left:-289.0px;width:600px;text-align:center;top:871px;font-size:11px;line-height:12px;font-weight:400;color:#262626;white-space:nowrap;">42</div>
<div style="left:0px;top:898px;width:22px;height:1px;background:#c6c6c6"></div>
<div style="left:-289.0px;width:600px;text-align:center;top:885px;font-size:11px;line-height:12px;font-weight:400;color:#262626;white-space:nowrap;">43</div>
<div style="left:0px;top:912px;width:22px;height:1px;background:#c6c6c6"></div>
<div style="left:-289.0px;width:600px;text-align:center;top:899px;font-size:11px;line-height:12px;font-weight:400;color:#262626;white-space:nowrap;">44</div>
<div style="left:0px;top:926px;width:22px;height:1px;background:#c6c6c6"></div>
<div style="left:-289.0px;width:600px;text-align:center;top:913px;font-size:11px;line-height:12px;font-weight:400;color:#262626;white-space:nowrap;">45</div>
<div style="left:0px;top:940px;width:22px;height:1px;background:#c6c6c6"></div>
<div style="left:-289.0px;width:600px;text-align:center;top:927px;font-size:11px;line-height:12px;font-weight:400;color:#262626;white-space:nowrap;">46</div>
<div style="left:0px;top:954px;width:22px;height:1px;background:#c6c6c6"></div>
<div style="left:-289.0px;width:600px;text-align:center;top:941px;font-size:11px;line-height:12px;font-weight:400;color:#262626;white-space:nowrap;">47</div>
<div style="left:0px;top:968px;width:22px;height:1px;background:#c6c6c6"></div>
<div style="left:-289.0px;width:600px;text-align:center;top:955px;font-size:11px;line-height:12px;font-weight:400;color:#262626;white-space:nowrap;">48</div>
<div style="left:0px;top:982px;width:22px;height:1px;background:#c6c6c6"></div>
<div style="left:-289.0px;width:600px;text-align:center;top:969px;font-size:11px;line-height:12px;font-weight:400;color:#262626;white-space:nowrap;">49</div>
<div style="left:-289.0px;width:600px;text-align:center;top:983px;font-size:11px;line-height:12px;font-weight:400;color:#262626;white-space:nowrap;">50</div>
<div style="left:23px;top:249px;width:1875px;height:741px;background:#fff"></div>
<div style="left:1898px;top:248px;width:1px;height:742px;background:#ababab"></div>
<div style="left:39px;top:262px;width:170px;height:19px;background:#53b27e"></div>
<div style="left:-176.0px;width:600px;text-align:center;top:264px;font-size:14px;line-height:16px;font-weight:700;color:#ffffff;white-space:nowrap;">Chairs</div>
<div style="left:211px;top:263px;width:17px;height:17px;background:linear-gradient(#fdfdfd,#eef0f4);border:1px solid #a9a9b0"></div>
<svg style="left:215px;top:269px;" width="9" height="5" viewBox="0 0 9 5"><path d="M0 0 L9 0 L4.5 5 Z" fill="#505050"/></svg>
<div style="left:39px;top:312px;width:170px;height:18px;background:#53b27e"></div>
<div style="left:211px;top:312px;width:68px;height:18px;background:#53b27e"></div>
<div style="left:281px;top:312px;width:68px;height:18px;background:#53b27e"></div>
<div style="left:351px;top:312px;width:68px;height:18px;background:#53b27e"></div>
<div style="left:421px;top:312px;width:68px;height:18px;background:#53b27e"></div>
<div style="left:491px;top:312px;width:68px;height:18px;background:#53b27e"></div>
<div style="left:561px;top:312px;width:68px;height:18px;background:#53b27e"></div>
<div style="left:631px;top:312px;width:68px;height:18px;background:#53b27e"></div>
<div style="left:701px;top:312px;width:68px;height:18px;background:#53b27e"></div>
<div style="left:771px;top:312px;width:68px;height:18px;background:#53b27e"></div>
<div style="left:841px;top:312px;width:68px;height:18px;background:#53b27e"></div>
<div style="left:911px;top:312px;width:68px;height:18px;background:#53b27e"></div>
<div style="left:981px;top:312px;width:68px;height:18px;background:#53b27e"></div>
<div style="left:1051px;top:312px;width:59px;height:18px;background:#53b27e"></div>
<div style="left:39px;top:330px;width:1071px;height:1px;background:repeating-linear-gradient(90deg,#53b27e 0 1px,transparent 1px 2px)"></div>
<div style="left:-176.0px;width:600px;text-align:center;top:315px;font-size:11.8px;line-height:14px;font-weight:700;color:#ffffff;white-space:nowrap;">Units</div>
<div style="left:-55.0px;width:600px;text-align:center;top:315px;font-size:11.8px;line-height:14px;font-weight:700;color:#ffffff;white-space:nowrap;">Jan</div>
<div style="left:15.0px;width:600px;text-align:center;top:315px;font-size:11.8px;line-height:14px;font-weight:700;color:#ffffff;white-space:nowrap;">Feb</div>
<div style="left:85.0px;width:600px;text-align:center;top:315px;font-size:11.8px;line-height:14px;font-weight:700;color:#ffffff;white-space:nowrap;">Mar</div>
<div style="left:155.0px;width:600px;text-align:center;top:315px;font-size:11.8px;line-height:14px;font-weight:700;color:#ffffff;white-space:nowrap;">Apr</div>
<div style="left:225.0px;width:600px;text-align:center;top:315px;font-size:11.8px;line-height:14px;font-weight:700;color:#ffffff;white-space:nowrap;">May</div>
<div style="left:295.0px;width:600px;text-align:center;top:315px;font-size:11.8px;line-height:14px;font-weight:700;color:#ffffff;white-space:nowrap;">Jun</div>
<div style="left:365.0px;width:600px;text-align:center;top:315px;font-size:11.8px;line-height:14px;font-weight:700;color:#ffffff;white-space:nowrap;">Jul</div>
<div style="left:435.0px;width:600px;text-align:center;top:315px;font-size:11.8px;line-height:14px;font-weight:700;color:#ffffff;white-space:nowrap;">Aug</div>
<div style="left:505.0px;width:600px;text-align:center;top:315px;font-size:11.8px;line-height:14px;font-weight:700;color:#ffffff;white-space:nowrap;">Sep</div>
<div style="left:575.0px;width:600px;text-align:center;top:315px;font-size:11.8px;line-height:14px;font-weight:700;color:#ffffff;white-space:nowrap;">Oct</div>
<div style="left:645.0px;width:600px;text-align:center;top:315px;font-size:11.8px;line-height:14px;font-weight:700;color:#ffffff;white-space:nowrap;">Nov</div>
<div style="left:715.0px;width:600px;text-align:center;top:315px;font-size:11.8px;line-height:14px;font-weight:700;color:#ffffff;white-space:nowrap;">Dec</div>
<div style="left:781.0px;width:600px;text-align:center;top:315px;font-size:11.8px;line-height:14px;font-weight:700;color:#ffffff;white-space:nowrap;">FY</div>
<div style="left:1050px;top:330px;width:62px;height:17px;background:#d9d9d9"></div>
<div style="left:38px;top:347px;width:1074px;height:1px;background:repeating-linear-gradient(90deg,#b8b8b8 0 1px,transparent 1px 2px)"></div>
<div style="left:41px;top:335px;font-size:10.2px;line-height:11px;font-weight:700;color:#000;white-space:nowrap;">2018 Actual</div>
<div style="left:-325px;width:600px;text-align:right;top:334px;font-size:10.5px;line-height:12px;font-weight:400;color:#000;white-space:nowrap;">44</div>
<div style="left:-255px;width:600px;text-align:right;top:334px;font-size:10.5px;line-height:12px;font-weight:400;color:#000;white-space:nowrap;">52</div>
<div style="left:-185px;width:600px;text-align:right;top:334px;font-size:10.5px;line-height:12px;font-weight:400;color:#000;white-space:nowrap;">82</div>
<div style="left:-115px;width:600px;text-align:right;top:334px;font-size:10.5px;line-height:12px;font-weight:400;color:#000;white-space:nowrap;">58</div>
<div style="left:-45px;width:600px;text-align:right;top:334px;font-size:10.5px;line-height:12px;font-weight:400;color:#000;white-space:nowrap;">62</div>
<div style="left:25px;width:600px;text-align:right;top:334px;font-size:10.5px;line-height:12px;font-weight:400;color:#000;white-space:nowrap;">86</div>
<div style="left:95px;width:600px;text-align:right;top:334px;font-size:10.5px;line-height:12px;font-weight:400;color:#000;white-space:nowrap;">104</div>
<div style="left:165px;width:600px;text-align:right;top:334px;font-size:10.5px;line-height:12px;font-weight:400;color:#000;white-space:nowrap;">72</div>
<div style="left:235px;width:600px;text-align:right;top:334px;font-size:10.5px;line-height:12px;font-weight:400;color:#000;white-space:nowrap;">68</div>
<div style="left:305px;width:600px;text-align:right;top:334px;font-size:10.5px;line-height:12px;font-weight:400;color:#000;white-space:nowrap;">64</div>
<div style="left:375px;width:600px;text-align:right;top:334px;font-size:10.5px;line-height:12px;font-weight:400;color:#000;white-space:nowrap;">94</div>
<div style="left:445px;width:600px;text-align:right;top:334px;font-size:10.5px;line-height:12px;font-weight:400;color:#000;white-space:nowrap;">88</div>
<div style="left:506px;width:600px;text-align:right;top:334px;font-size:10.5px;line-height:12px;font-weight:400;color:#000;white-space:nowrap;">874</div>
<div style="left:1050px;top:348px;width:62px;height:16px;background:#d9d9d9"></div>
<div style="left:38px;top:364px;width:1074px;height:1px;background:repeating-linear-gradient(90deg,#b8b8b8 0 1px,transparent 1px 2px)"></div>
<div style="left:41px;top:352px;font-size:10.2px;line-height:11px;font-weight:700;color:#000;white-space:nowrap;">2019 Actual</div>
<div style="left:-325px;width:600px;text-align:right;top:351px;font-size:10.5px;line-height:12px;font-weight:400;color:#000;white-space:nowrap;">110</div>
<div style="left:-255px;width:600px;text-align:right;top:351px;font-size:10.5px;line-height:12px;font-weight:400;color:#000;white-space:nowrap;">78</div>
<div style="left:-185px;width:600px;text-align:right;top:351px;font-size:10.5px;line-height:12px;font-weight:400;color:#000;white-space:nowrap;">68</div>
<div style="left:-115px;width:600px;text-align:right;top:351px;font-size:10.5px;line-height:12px;font-weight:400;color:#000;white-space:nowrap;">76</div>
<div style="left:-45px;width:600px;text-align:right;top:351px;font-size:10.5px;line-height:12px;font-weight:400;color:#000;white-space:nowrap;">118</div>
<div style="left:25px;width:600px;text-align:right;top:351px;font-size:10.5px;line-height:12px;font-weight:400;color:#000;white-space:nowrap;">66</div>
<div style="left:95px;width:600px;text-align:right;top:351px;font-size:10.5px;line-height:12px;font-weight:400;color:#000;white-space:nowrap;">92</div>
<div style="left:165px;width:600px;text-align:right;top:351px;font-size:10.5px;line-height:12px;font-weight:400;color:#000;white-space:nowrap;">72</div>
<div style="left:235px;width:600px;text-align:right;top:351px;font-size:10.5px;line-height:12px;font-weight:400;color:#000;white-space:nowrap;">92</div>
<div style="left:305px;width:600px;text-align:right;top:351px;font-size:10.5px;line-height:12px;font-weight:400;color:#000;white-space:nowrap;">58</div>
<div style="left:375px;width:600px;text-align:right;top:351px;font-size:10.5px;line-height:12px;font-weight:400;color:#000;white-space:nowrap;">86</div>
<div style="left:445px;width:600px;text-align:right;top:351px;font-size:10.5px;line-height:12px;font-weight:400;color:#000;white-space:nowrap;">64</div>
<div style="left:506px;width:600px;text-align:right;top:351px;font-size:10.5px;line-height:12px;font-weight:400;color:#000;white-space:nowrap;">980</div>
<div style="left:38px;top:365px;width:1074px;height:16px;background:#8fd0a9"></div>
<div style="left:38px;top:381px;width:1074px;height:1px;background:repeating-linear-gradient(90deg,#b8b8b8 0 1px,transparent 1px 2px)"></div>
<div style="left:41px;top:369px;font-size:10.2px;line-height:11px;font-weight:700;color:#000;white-space:nowrap;">2020 Budget</div>
<div style="left:-325px;width:600px;text-align:right;top:368px;font-size:10.5px;line-height:12px;font-weight:700;color:#000;white-space:nowrap;">93</div>
<div style="left:-255px;width:600px;text-align:right;top:368px;font-size:10.5px;line-height:12px;font-weight:700;color:#000;white-space:nowrap;">86</div>
<div style="left:-185px;width:600px;text-align:right;top:368px;font-size:10.5px;line-height:12px;font-weight:700;color:#000;white-space:nowrap;">92</div>
<div style="left:-115px;width:600px;text-align:right;top:368px;font-size:10.5px;line-height:12px;font-weight:700;color:#000;white-space:nowrap;">98</div>
<div style="left:-45px;width:600px;text-align:right;top:368px;font-size:10.5px;line-height:12px;font-weight:700;color:#000;white-space:nowrap;">94</div>
<div style="left:25px;width:600px;text-align:right;top:368px;font-size:10.5px;line-height:12px;font-weight:700;color:#000;white-space:nowrap;">79</div>
<div style="left:95px;width:600px;text-align:right;top:368px;font-size:10.5px;line-height:12px;font-weight:700;color:#000;white-space:nowrap;">99</div>
<div style="left:165px;width:600px;text-align:right;top:368px;font-size:10.5px;line-height:12px;font-weight:700;color:#000;white-space:nowrap;">94</div>
<div style="left:235px;width:600px;text-align:right;top:368px;font-size:10.5px;line-height:12px;font-weight:700;color:#000;white-space:nowrap;">91</div>
<div style="left:305px;width:600px;text-align:right;top:368px;font-size:10.5px;line-height:12px;font-weight:700;color:#000;white-space:nowrap;">82</div>
<div style="left:375px;width:600px;text-align:right;top:368px;font-size:10.5px;line-height:12px;font-weight:700;color:#000;white-space:nowrap;">97</div>
<div style="left:445px;width:600px;text-align:right;top:368px;font-size:10.5px;line-height:12px;font-weight:700;color:#000;white-space:nowrap;">90</div>
<div style="left:506px;width:600px;text-align:right;top:368px;font-size:10.5px;line-height:12px;font-weight:700;color:#000;white-space:nowrap;">1,096</div>
<div style="left:1050px;top:382px;width:62px;height:16px;background:#d9d9d9"></div>
<div style="left:38px;top:398px;width:1074px;height:1px;background:repeating-linear-gradient(90deg,#b8b8b8 0 1px,transparent 1px 2px)"></div>
<div style="left:41px;top:386px;font-size:10.2px;line-height:11px;font-weight:700;color:#000;white-space:nowrap;">2020 Actual</div>
<div style="left:-325px;width:600px;text-align:right;top:385px;font-size:10.5px;line-height:12px;font-weight:700;color:#000;white-space:nowrap;">110</div>
<div style="left:-255px;width:600px;text-align:right;top:385px;font-size:10.5px;line-height:12px;font-weight:700;color:#000;white-space:nowrap;">76</div>
<div style="left:-185px;width:600px;text-align:right;top:385px;font-size:10.5px;line-height:12px;font-weight:700;color:#000;white-space:nowrap;">104</div>
<div style="left:-115px;width:600px;text-align:right;top:385px;font-size:10.5px;line-height:12px;font-weight:700;color:#000;white-space:nowrap;">74</div>
<div style="left:-45px;width:600px;text-align:right;top:385px;font-size:10.5px;line-height:12px;font-weight:700;color:#000;white-space:nowrap;">52</div>
<div style="left:25px;width:600px;text-align:right;top:385px;font-size:10.5px;line-height:12px;font-weight:700;color:#000;white-space:nowrap;">124</div>
<div style="left:95px;width:600px;text-align:right;top:385px;font-size:10.5px;line-height:12px;font-weight:700;color:#000;white-space:nowrap;">122</div>
<div style="left:750px;top:385px;font-size:10.5px;line-height:12px;font-weight:700;color:#000;white-space:nowrap;">-</div>
<div style="left:820px;top:385px;font-size:10.5px;line-height:12px;font-weight:700;color:#000;white-space:nowrap;">-</div>
<div style="left:890px;top:385px;font-size:10.5px;line-height:12px;font-weight:700;color:#000;white-space:nowrap;">-</div>
<div style="left:960px;top:385px;font-size:10.5px;line-height:12px;font-weight:700;color:#000;white-space:nowrap;">-</div>
<div style="left:1030px;top:385px;font-size:10.5px;line-height:12px;font-weight:700;color:#000;white-space:nowrap;">-</div>
<div style="left:506px;width:600px;text-align:right;top:385px;font-size:10.5px;line-height:12px;font-weight:700;color:#000;white-space:nowrap;">662</div>
<div style="left:1050px;top:399px;width:62px;height:13px;background:#d9d9d9"></div>
<div style="left:38px;top:412px;width:1074px;height:1px;background:repeating-linear-gradient(90deg,#b8b8b8 0 1px,transparent 1px 2px)"></div>
<div style="left:41px;top:400px;font-size:10.2px;line-height:11px;font-weight:700;color:#000;white-space:nowrap;">Forecast</div>
<div style="left:-325px;width:600px;text-align:right;top:399px;font-size:10.5px;line-height:12px;font-weight:700;color:#000;white-space:nowrap;">110</div>
<div style="left:-255px;width:600px;text-align:right;top:399px;font-size:10.5px;line-height:12px;font-weight:700;color:#000;white-space:nowrap;">76</div>
<div style="left:-185px;width:600px;text-align:right;top:399px;font-size:10.5px;line-height:12px;font-weight:700;color:#000;white-space:nowrap;">104</div>
<div style="left:-115px;width:600px;text-align:right;top:399px;font-size:10.5px;line-height:12px;font-weight:700;color:#000;white-space:nowrap;">74</div>
<div style="left:-45px;width:600px;text-align:right;top:399px;font-size:10.5px;line-height:12px;font-weight:700;color:#000;white-space:nowrap;">52</div>
<div style="left:25px;width:600px;text-align:right;top:399px;font-size:10.5px;line-height:12px;font-weight:700;color:#000;white-space:nowrap;">124</div>
<div style="left:95px;width:600px;text-align:right;top:399px;font-size:10.5px;line-height:12px;font-weight:700;color:#000;white-space:nowrap;">122</div>
<div style="left:165px;width:600px;text-align:right;top:399px;font-size:10.5px;line-height:12px;font-weight:700;color:#000;white-space:nowrap;">87</div>
<div style="left:235px;width:600px;text-align:right;top:399px;font-size:10.5px;line-height:12px;font-weight:700;color:#000;white-space:nowrap;">95</div>
<div style="left:305px;width:600px;text-align:right;top:399px;font-size:10.5px;line-height:12px;font-weight:700;color:#000;white-space:nowrap;">97</div>
<div style="left:375px;width:600px;text-align:right;top:399px;font-size:10.5px;line-height:12px;font-weight:700;color:#000;white-space:nowrap;">97</div>
<div style="left:445px;width:600px;text-align:right;top:399px;font-size:10.5px;line-height:12px;font-weight:700;color:#000;white-space:nowrap;">91</div>
<div style="left:506px;width:600px;text-align:right;top:399px;font-size:10.5px;line-height:12px;font-weight:700;color:#000;white-space:nowrap;">1,128</div>
<div style="left:39px;top:430px;width:170px;height:18px;background:#53b27e"></div>
<div style="left:211px;top:430px;width:68px;height:18px;background:#53b27e"></div>
<div style="left:281px;top:430px;width:68px;height:18px;background:#53b27e"></div>
<div style="left:351px;top:430px;width:68px;height:18px;background:#53b27e"></div>
<div style="left:421px;top:430px;width:68px;height:18px;background:#53b27e"></div>
<div style="left:491px;top:430px;width:68px;height:18px;background:#53b27e"></div>
<div style="left:561px;top:430px;width:68px;height:18px;background:#53b27e"></div>
<div style="left:631px;top:430px;width:68px;height:18px;background:#53b27e"></div>
<div style="left:701px;top:430px;width:68px;height:18px;background:#53b27e"></div>
<div style="left:771px;top:430px;width:68px;height:18px;background:#53b27e"></div>
<div style="left:841px;top:430px;width:68px;height:18px;background:#53b27e"></div>
<div style="left:911px;top:430px;width:68px;height:18px;background:#53b27e"></div>
<div style="left:981px;top:430px;width:68px;height:18px;background:#53b27e"></div>
<div style="left:1051px;top:430px;width:59px;height:18px;background:#53b27e"></div>
<div style="left:39px;top:448px;width:1071px;height:1px;background:repeating-linear-gradient(90deg,#53b27e 0 1px,transparent 1px 2px)"></div>
<div style="left:-176.0px;width:600px;text-align:center;top:433px;font-size:11.8px;line-height:14px;font-weight:700;color:#ffffff;white-space:nowrap;">Sales in kUSD</div>
<div style="left:-55.0px;width:600px;text-align:center;top:433px;font-size:11.8px;line-height:14px;font-weight:700;color:#ffffff;white-space:nowrap;">Jan</div>
<div style="left:15.0px;width:600px;text-align:center;top:433px;font-size:11.8px;line-height:14px;font-weight:700;color:#ffffff;white-space:nowrap;">Feb</div>
<div style="left:85.0px;width:600px;text-align:center;top:433px;font-size:11.8px;line-height:14px;font-weight:700;color:#ffffff;white-space:nowrap;">Mar</div>
<div style="left:155.0px;width:600px;text-align:center;top:433px;font-size:11.8px;line-height:14px;font-weight:700;color:#ffffff;white-space:nowrap;">Apr</div>
<div style="left:225.0px;width:600px;text-align:center;top:433px;font-size:11.8px;line-height:14px;font-weight:700;color:#ffffff;white-space:nowrap;">May</div>
<div style="left:295.0px;width:600px;text-align:center;top:433px;font-size:11.8px;line-height:14px;font-weight:700;color:#ffffff;white-space:nowrap;">Jun</div>
<div style="left:365.0px;width:600px;text-align:center;top:433px;font-size:11.8px;line-height:14px;font-weight:700;color:#ffffff;white-space:nowrap;">Jul</div>
<div style="left:435.0px;width:600px;text-align:center;top:433px;font-size:11.8px;line-height:14px;font-weight:700;color:#ffffff;white-space:nowrap;">Aug</div>
<div style="left:505.0px;width:600px;text-align:center;top:433px;font-size:11.8px;line-height:14px;font-weight:700;color:#ffffff;white-space:nowrap;">Sep</div>
<div style="left:575.0px;width:600px;text-align:center;top:433px;font-size:11.8px;line-height:14px;font-weight:700;color:#ffffff;white-space:nowrap;">Oct</div>
<div style="left:645.0px;width:600px;text-align:center;top:433px;font-size:11.8px;line-height:14px;font-weight:700;color:#ffffff;white-space:nowrap;">Nov</div>
<div style="left:715.0px;width:600px;text-align:center;top:433px;font-size:11.8px;line-height:14px;font-weight:700;color:#ffffff;white-space:nowrap;">Dec</div>
<div style="left:781.0px;width:600px;text-align:center;top:433px;font-size:11.8px;line-height:14px;font-weight:700;color:#ffffff;white-space:nowrap;">FY</div>
<div style="left:1050px;top:448px;width:62px;height:15px;background:#d9d9d9"></div>
<div style="left:38px;top:463px;width:1074px;height:1px;background:repeating-linear-gradient(90deg,#b8b8b8 0 1px,transparent 1px 2px)"></div>
<div style="left:41px;top:451px;font-size:10.2px;line-height:11px;font-weight:700;color:#000;white-space:nowrap;">2018 Actual</div>
<div style="left:-325px;width:600px;text-align:right;top:450px;font-size:10.5px;line-height:12px;font-weight:400;color:#000;white-space:nowrap;">150</div>
<div style="left:-255px;width:600px;text-align:right;top:450px;font-size:10.5px;line-height:12px;font-weight:400;color:#000;white-space:nowrap;">202</div>
<div style="left:-185px;width:600px;text-align:right;top:450px;font-size:10.5px;line-height:12px;font-weight:400;color:#000;white-space:nowrap;">287</div>
<div style="left:-115px;width:600px;text-align:right;top:450px;font-size:10.5px;line-height:12px;font-weight:400;color:#000;white-space:nowrap;">207</div>
<div style="left:-45px;width:600px;text-align:right;top:450px;font-size:10.5px;line-height:12px;font-weight:400;color:#000;white-space:nowrap;">205</div>
<div style="left:25px;width:600px;text-align:right;top:450px;font-size:10.5px;line-height:12px;font-weight:400;color:#000;white-space:nowrap;">262</div>
<div style="left:95px;width:600px;text-align:right;top:450px;font-size:10.5px;line-height:12px;font-weight:400;color:#000;white-space:nowrap;">361</div>
<div style="left:165px;width:600px;text-align:right;top:450px;font-size:10.5px;line-height:12px;font-weight:400;color:#000;white-space:nowrap;">244</div>
<div style="left:235px;width:600px;text-align:right;top:450px;font-size:10.5px;line-height:12px;font-weight:400;color:#000;white-space:nowrap;">228</div>
<div style="left:305px;width:600px;text-align:right;top:450px;font-size:10.5px;line-height:12px;font-weight:400;color:#000;white-space:nowrap;">230</div>
<div style="left:375px;width:600px;text-align:right;top:450px;font-size:10.5px;line-height:12px;font-weight:400;color:#000;white-space:nowrap;">343</div>
<div style="left:445px;width:600px;text-align:right;top:450px;font-size:10.5px;line-height:12px;font-weight:400;color:#000;white-space:nowrap;">284</div>
<div style="left:506px;width:600px;text-align:right;top:450px;font-size:10.5px;line-height:12px;font-weight:400;color:#000;white-space:nowrap;">3,004</div>
<div style="left:1050px;top:464px;width:62px;height:14px;background:#d9d9d9"></div>
<div style="left:38px;top:478px;width:1074px;height:1px;background:repeating-linear-gradient(90deg,#b8b8b8 0 1px,transparent 1px 2px)"></div>
<div style="left:41px;top:466px;font-size:10.2px;line-height:11px;font-weight:700;color:#000;white-space:nowrap;">2019 Actual</div>
<div style="left:-325px;width:600px;text-align:right;top:465px;font-size:10.5px;line-height:12px;font-weight:400;color:#000;white-space:nowrap;">331</div>
<div style="left:-255px;width:600px;text-align:right;top:465px;font-size:10.5px;line-height:12px;font-weight:400;color:#000;white-space:nowrap;">192</div>
<div style="left:-185px;width:600px;text-align:right;top:465px;font-size:10.5px;line-height:12px;font-weight:400;color:#000;white-space:nowrap;">294</div>
<div style="left:-115px;width:600px;text-align:right;top:465px;font-size:10.5px;line-height:12px;font-weight:400;color:#000;white-space:nowrap;">298</div>
<div style="left:-45px;width:600px;text-align:right;top:465px;font-size:10.5px;line-height:12px;font-weight:400;color:#000;white-space:nowrap;">371</div>
<div style="left:25px;width:600px;text-align:right;top:465px;font-size:10.5px;line-height:12px;font-weight:400;color:#000;white-space:nowrap;">212</div>
<div style="left:95px;width:600px;text-align:right;top:465px;font-size:10.5px;line-height:12px;font-weight:400;color:#000;white-space:nowrap;">330</div>
<div style="left:165px;width:600px;text-align:right;top:465px;font-size:10.5px;line-height:12px;font-weight:400;color:#000;white-space:nowrap;">207</div>
<div style="left:235px;width:600px;text-align:right;top:465px;font-size:10.5px;line-height:12px;font-weight:400;color:#000;white-space:nowrap;">331</div>
<div style="left:305px;width:600px;text-align:right;top:465px;font-size:10.5px;line-height:12px;font-weight:400;color:#000;white-space:nowrap;">192</div>
<div style="left:375px;width:600px;text-align:right;top:465px;font-size:10.5px;line-height:12px;font-weight:400;color:#000;white-space:nowrap;">320</div>
<div style="left:445px;width:600px;text-align:right;top:465px;font-size:10.5px;line-height:12px;font-weight:400;color:#000;white-space:nowrap;">196</div>
<div style="left:506px;width:600px;text-align:right;top:465px;font-size:10.5px;line-height:12px;font-weight:400;color:#000;white-space:nowrap;">3,275</div>
<div style="left:38px;top:479px;width:1074px;height:14px;background:#8fd0a9"></div>
<div style="left:38px;top:493px;width:1074px;height:1px;background:repeating-linear-gradient(90deg,#b8b8b8 0 1px,transparent 1px 2px)"></div>
<div style="left:41px;top:481px;font-size:10.2px;line-height:11px;font-weight:700;color:#000;white-space:nowrap;">2020 Budget</div>
<div style="left:-325px;width:600px;text-align:right;top:480px;font-size:10.5px;line-height:12px;font-weight:700;color:#000;white-space:nowrap;">294</div>
<div style="left:-255px;width:600px;text-align:right;top:480px;font-size:10.5px;line-height:12px;font-weight:700;color:#000;white-space:nowrap;">266</div>
<div style="left:-185px;width:600px;text-align:right;top:480px;font-size:10.5px;line-height:12px;font-weight:700;color:#000;white-space:nowrap;">302</div>
<div style="left:-115px;width:600px;text-align:right;top:480px;font-size:10.5px;line-height:12px;font-weight:700;color:#000;white-space:nowrap;">315</div>
<div style="left:-45px;width:600px;text-align:right;top:480px;font-size:10.5px;line-height:12px;font-weight:700;color:#000;white-space:nowrap;">314</div>
<div style="left:25px;width:600px;text-align:right;top:480px;font-size:10.5px;line-height:12px;font-weight:700;color:#000;white-space:nowrap;">310</div>
<div style="left:95px;width:600px;text-align:right;top:480px;font-size:10.5px;line-height:12px;font-weight:700;color:#000;white-space:nowrap;">330</div>
<div style="left:165px;width:600px;text-align:right;top:480px;font-size:10.5px;line-height:12px;font-weight:700;color:#000;white-space:nowrap;">290</div>
<div style="left:235px;width:600px;text-align:right;top:480px;font-size:10.5px;line-height:12px;font-weight:700;color:#000;white-space:nowrap;">316</div>
<div style="left:305px;width:600px;text-align:right;top:480px;font-size:10.5px;line-height:12px;font-weight:700;color:#000;white-space:nowrap;">322</div>
<div style="left:375px;width:600px;text-align:right;top:480px;font-size:10.5px;line-height:12px;font-weight:700;color:#000;white-space:nowrap;">322</div>
<div style="left:445px;width:600px;text-align:right;top:480px;font-size:10.5px;line-height:12px;font-weight:700;color:#000;white-space:nowrap;">302</div>
<div style="left:506px;width:600px;text-align:right;top:480px;font-size:10.5px;line-height:12px;font-weight:700;color:#000;white-space:nowrap;">3,681</div>
<div style="left:1050px;top:494px;width:62px;height:14px;background:#d9d9d9"></div>
<div style="left:38px;top:508px;width:1074px;height:1px;background:repeating-linear-gradient(90deg,#b8b8b8 0 1px,transparent 1px 2px)"></div>
<div style="left:41px;top:496px;font-size:10.2px;line-height:11px;font-weight:700;color:#000;white-space:nowrap;">2020 Actual</div>
<div style="left:-325px;width:600px;text-align:right;top:495px;font-size:10.5px;line-height:12px;font-weight:700;color:#000;white-space:nowrap;">347</div>
<div style="left:-255px;width:600px;text-align:right;top:495px;font-size:10.5px;line-height:12px;font-weight:700;color:#000;white-space:nowrap;">239</div>
<div style="left:-185px;width:600px;text-align:right;top:495px;font-size:10.5px;line-height:12px;font-weight:700;color:#000;white-space:nowrap;">351</div>
<div style="left:-115px;width:600px;text-align:right;top:495px;font-size:10.5px;line-height:12px;font-weight:700;color:#000;white-space:nowrap;">268</div>
<div style="left:-45px;width:600px;text-align:right;top:495px;font-size:10.5px;line-height:12px;font-weight:700;color:#000;white-space:nowrap;">199</div>
<div style="left:25px;width:600px;text-align:right;top:495px;font-size:10.5px;line-height:12px;font-weight:700;color:#000;white-space:nowrap;">451</div>
<div style="left:95px;width:600px;text-align:right;top:495px;font-size:10.5px;line-height:12px;font-weight:700;color:#000;white-space:nowrap;">349</div>
<div style="left:750px;top:495px;font-size:10.5px;line-height:12px;font-weight:700;color:#000;white-space:nowrap;">-</div>
<div style="left:820px;top:495px;font-size:10.5px;line-height:12px;font-weight:700;color:#000;white-space:nowrap;">-</div>
<div style="left:890px;top:495px;font-size:10.5px;line-height:12px;font-weight:700;color:#000;white-space:nowrap;">-</div>
<div style="left:960px;top:495px;font-size:10.5px;line-height:12px;font-weight:700;color:#000;white-space:nowrap;">-</div>
<div style="left:1030px;top:495px;font-size:10.5px;line-height:12px;font-weight:700;color:#000;white-space:nowrap;">-</div>
<div style="left:506px;width:600px;text-align:right;top:495px;font-size:10.5px;line-height:12px;font-weight:700;color:#000;white-space:nowrap;">2,203</div>
<div style="left:1050px;top:509px;width:62px;height:13px;background:#d9d9d9"></div>
<div style="left:38px;top:522px;width:1074px;height:1px;background:repeating-linear-gradient(90deg,#b8b8b8 0 1px,transparent 1px 2px)"></div>
<div style="left:41px;top:510px;font-size:10.2px;line-height:11px;font-weight:700;color:#000;white-space:nowrap;">Forecast</div>
<div style="left:-325px;width:600px;text-align:right;top:509px;font-size:10.5px;line-height:12px;font-weight:700;color:#000;white-space:nowrap;">347</div>
<div style="left:-255px;width:600px;text-align:right;top:509px;font-size:10.5px;line-height:12px;font-weight:700;color:#000;white-space:nowrap;">239</div>
<div style="left:-185px;width:600px;text-align:right;top:509px;font-size:10.5px;line-height:12px;font-weight:700;color:#000;white-space:nowrap;">351</div>
<div style="left:-115px;width:600px;text-align:right;top:509px;font-size:10.5px;line-height:12px;font-weight:700;color:#000;white-space:nowrap;">268</div>
<div style="left:-45px;width:600px;text-align:right;top:509px;font-size:10.5px;line-height:12px;font-weight:700;color:#000;white-space:nowrap;">199</div>
<div style="left:25px;width:600px;text-align:right;top:509px;font-size:10.5px;line-height:12px;font-weight:700;color:#000;white-space:nowrap;">451</div>
<div style="left:95px;width:600px;text-align:right;top:509px;font-size:10.5px;line-height:12px;font-weight:700;color:#000;white-space:nowrap;">349</div>
<div style="left:165px;width:600px;text-align:right;top:509px;font-size:10.5px;line-height:12px;font-weight:700;color:#000;white-space:nowrap;">290</div>
<div style="left:235px;width:600px;text-align:right;top:509px;font-size:10.5px;line-height:12px;font-weight:700;color:#000;white-space:nowrap;">316</div>
<div style="left:305px;width:600px;text-align:right;top:509px;font-size:10.5px;line-height:12px;font-weight:700;color:#000;white-space:nowrap;">322</div>
<div style="left:375px;width:600px;text-align:right;top:509px;font-size:10.5px;line-height:12px;font-weight:700;color:#000;white-space:nowrap;">322</div>
<div style="left:445px;width:600px;text-align:right;top:509px;font-size:10.5px;line-height:12px;font-weight:700;color:#000;white-space:nowrap;">302</div>
<div style="left:506px;width:600px;text-align:right;top:509px;font-size:10.5px;line-height:12px;font-weight:700;color:#000;white-space:nowrap;">3,755</div>
<div style="left:39px;top:536px;width:170px;height:18px;background:#53b27e"></div>
<div style="left:211px;top:536px;width:68px;height:18px;background:#53b27e"></div>
<div style="left:281px;top:536px;width:68px;height:18px;background:#53b27e"></div>
<div style="left:351px;top:536px;width:68px;height:18px;background:#53b27e"></div>
<div style="left:421px;top:536px;width:68px;height:18px;background:#53b27e"></div>
<div style="left:491px;top:536px;width:68px;height:18px;background:#53b27e"></div>
<div style="left:561px;top:536px;width:68px;height:18px;background:#53b27e"></div>
<div style="left:631px;top:536px;width:68px;height:18px;background:#53b27e"></div>
<div style="left:701px;top:536px;width:68px;height:18px;background:#53b27e"></div>
<div style="left:771px;top:536px;width:68px;height:18px;background:#53b27e"></div>
<div style="left:841px;top:536px;width:68px;height:18px;background:#53b27e"></div>
<div style="left:911px;top:536px;width:68px;height:18px;background:#53b27e"></div>
<div style="left:981px;top:536px;width:68px;height:18px;background:#53b27e"></div>
<div style="left:1051px;top:536px;width:59px;height:18px;background:#53b27e"></div>
<div style="left:39px;top:554px;width:1071px;height:1px;background:repeating-linear-gradient(90deg,#53b27e 0 1px,transparent 1px 2px)"></div>
<div style="left:-176.0px;width:600px;text-align:center;top:539px;font-size:11.8px;line-height:14px;font-weight:700;color:#ffffff;white-space:nowrap;">Average Price in kUSD</div>
<div style="left:-55.0px;width:600px;text-align:center;top:539px;font-size:11.8px;line-height:14px;font-weight:700;color:#ffffff;white-space:nowrap;">Jan</div>
<div style="left:15.0px;width:600px;text-align:center;top:539px;font-size:11.8px;line-height:14px;font-weight:700;color:#ffffff;white-space:nowrap;">Feb</div>
<div style="left:85.0px;width:600px;text-align:center;top:539px;font-size:11.8px;line-height:14px;font-weight:700;color:#ffffff;white-space:nowrap;">Mar</div>
<div style="left:155.0px;width:600px;text-align:center;top:539px;font-size:11.8px;line-height:14px;font-weight:700;color:#ffffff;white-space:nowrap;">Apr</div>
<div style="left:225.0px;width:600px;text-align:center;top:539px;font-size:11.8px;line-height:14px;font-weight:700;color:#ffffff;white-space:nowrap;">May</div>
<div style="left:295.0px;width:600px;text-align:center;top:539px;font-size:11.8px;line-height:14px;font-weight:700;color:#ffffff;white-space:nowrap;">Jun</div>
<div style="left:365.0px;width:600px;text-align:center;top:539px;font-size:11.8px;line-height:14px;font-weight:700;color:#ffffff;white-space:nowrap;">Jul</div>
<div style="left:435.0px;width:600px;text-align:center;top:539px;font-size:11.8px;line-height:14px;font-weight:700;color:#ffffff;white-space:nowrap;">Aug</div>
<div style="left:505.0px;width:600px;text-align:center;top:539px;font-size:11.8px;line-height:14px;font-weight:700;color:#ffffff;white-space:nowrap;">Sep</div>
<div style="left:575.0px;width:600px;text-align:center;top:539px;font-size:11.8px;line-height:14px;font-weight:700;color:#ffffff;white-space:nowrap;">Oct</div>
<div style="left:645.0px;width:600px;text-align:center;top:539px;font-size:11.8px;line-height:14px;font-weight:700;color:#ffffff;white-space:nowrap;">Nov</div>
<div style="left:715.0px;width:600px;text-align:center;top:539px;font-size:11.8px;line-height:14px;font-weight:700;color:#ffffff;white-space:nowrap;">Dec</div>
<div style="left:781.0px;width:600px;text-align:center;top:539px;font-size:11.8px;line-height:14px;font-weight:700;color:#ffffff;white-space:nowrap;">FY</div>
<div style="left:1050px;top:554px;width:62px;height:14px;background:#d9d9d9"></div>
<div style="left:38px;top:568px;width:1074px;height:1px;background:repeating-linear-gradient(90deg,#b8b8b8 0 1px,transparent 1px 2px)"></div>
<div style="left:41px;top:556px;font-size:10.2px;line-height:11px;font-weight:700;color:#000;white-space:nowrap;">2018 Actual</div>
<div style="left:-325px;width:600px;text-align:right;top:555px;font-size:10.5px;line-height:12px;font-weight:400;color:#000;white-space:nowrap;">3.4</div>
<div style="left:-255px;width:600px;text-align:right;top:555px;font-size:10.5px;line-height:12px;font-weight:400;color:#000;white-space:nowrap;">3.9</div>
<div style="left:-185px;width:600px;text-align:right;top:555px;font-size:10.5px;line-height:12px;font-weight:400;color:#000;white-space:nowrap;">3.5</div>
<div style="left:-115px;width:600px;text-align:right;top:555px;font-size:10.5px;line-height:12px;font-weight:400;color:#000;white-space:nowrap;">3.6</div>
<div style="left:-45px;width:600px;text-align:right;top:555px;font-size:10.5px;line-height:12px;font-weight:400;color:#000;white-space:nowrap;">3.3</div>
<div style="left:25px;width:600px;text-align:right;top:555px;font-size:10.5px;line-height:12px;font-weight:400;color:#000;white-space:nowrap;">3.1</div>
<div style="left:95px;width:600px;text-align:right;top:555px;font-size:10.5px;line-height:12px;font-weight:400;color:#000;white-space:nowrap;">3.5</div>
<div style="left:165px;width:600px;text-align:right;top:555px;font-size:10.5px;line-height:12px;font-weight:400;color:#000;white-space:nowrap;">3.4</div>
<div style="left:235px;width:600px;text-align:right;top:555px;font-size:10.5px;line-height:12px;font-weight:400;color:#000;white-space:nowrap;">3.3</div>
<div style="left:305px;width:600px;text-align:right;top:555px;font-size:10.5px;line-height:12px;font-weight:400;color:#000;white-space:nowrap;">3.6</div>
<div style="left:375px;width:600px;text-align:right;top:555px;font-size:10.5px;line-height:12px;font-weight:400;color:#000;white-space:nowrap;">3.6</div>
<div style="left:445px;width:600px;text-align:right;top:555px;font-size:10.5px;line-height:12px;font-weight:400;color:#000;white-space:nowrap;">3.2</div>
<div style="left:506px;width:600px;text-align:right;top:555px;font-size:10.5px;line-height:12px;font-weight:400;color:#000;white-space:nowrap;">3.4</div>
<div style="left:1050px;top:569px;width:62px;height:13px;background:#d9d9d9"></div>
<div style="left:38px;top:582px;width:1074px;height:1px;background:repeating-linear-gradient(90deg,#b8b8b8 0 1px,transparent 1px 2px)"></div>
<div style="left:41px;top:570px;font-size:10.2px;line-height:11px;font-weight:700;color:#000;white-space:nowrap;">2019 Actual</div>
<div style="left:-325px;width:600px;text-align:right;top:569px;font-size:10.5px;line-height:12px;font-weight:400;color:#000;white-space:nowrap;">3.0</div>
<div style="left:-255px;width:600px;text-align:right;top:569px;font-size:10.5px;line-height:12px;font-weight:400;color:#000;white-space:nowrap;">2.5</div>
<div style="left:-185px;width:600px;text-align:right;top:569px;font-size:10.5px;line-height:12px;font-weight:400;color:#000;white-space:nowrap;">4.3</div>
<div style="left:-115px;width:600px;text-align:right;top:569px;font-size:10.5px;line-height:12px;font-weight:400;color:#000;white-space:nowrap;">3.9</div>
<div style="left:-45px;width:600px;text-align:right;top:569px;font-size:10.5px;line-height:12px;font-weight:400;color:#000;white-space:nowrap;">3.1</div>
<div style="left:25px;width:600px;text-align:right;top:569px;font-size:10.5px;line-height:12px;font-weight:400;color:#000;white-space:nowrap;">3.2</div>
<div style="left:95px;width:600px;text-align:right;top:569px;font-size:10.5px;line-height:12px;font-weight:400;color:#000;white-space:nowrap;">3.6</div>
<div style="left:165px;width:600px;text-align:right;top:569px;font-size:10.5px;line-height:12px;font-weight:400;color:#000;white-space:nowrap;">2.9</div>
<div style="left:235px;width:600px;text-align:right;top:569px;font-size:10.5px;line-height:12px;font-weight:400;color:#000;white-space:nowrap;">3.6</div>
<div style="left:305px;width:600px;text-align:right;top:569px;font-size:10.5px;line-height:12px;font-weight:400;color:#000;white-space:nowrap;">3.3</div>
<div style="left:375px;width:600px;text-align:right;top:569px;font-size:10.5px;line-height:12px;font-weight:400;color:#000;white-space:nowrap;">3.7</div>
<div style="left:445px;width:600px;text-align:right;top:569px;font-size:10.5px;line-height:12px;font-weight:400;color:#000;white-space:nowrap;">3.1</div>
<div style="left:506px;width:600px;text-align:right;top:569px;font-size:10.5px;line-height:12px;font-weight:400;color:#000;white-space:nowrap;">3.3</div>
<div style="left:38px;top:583px;width:1074px;height:13px;background:#8fd0a9"></div>
<div style="left:38px;top:596px;width:1074px;height:1px;background:repeating-linear-gradient(90deg,#b8b8b8 0 1px,transparent 1px 2px)"></div>
<div style="left:41px;top:584px;font-size:10.2px;line-height:11px;font-weight:700;color:#000;white-space:nowrap;">2020 Budget</div>
<div style="left:-325px;width:600px;text-align:right;top:583px;font-size:10.5px;line-height:12px;font-weight:700;color:#000;white-space:nowrap;">3.1</div>
<div style="left:-255px;width:600px;text-align:right;top:583px;font-size:10.5px;line-height:12px;font-weight:700;color:#000;white-space:nowrap;">3.1</div>
<div style="left:-185px;width:600px;text-align:right;top:583px;font-size:10.5px;line-height:12px;font-weight:700;color:#000;white-space:nowrap;">3.3</div>
<div style="left:-115px;width:600px;text-align:right;top:583px;font-size:10.5px;line-height:12px;font-weight:700;color:#000;white-space:nowrap;">3.2</div>
<div style="left:-45px;width:600px;text-align:right;top:583px;font-size:10.5px;line-height:12px;font-weight:700;color:#000;white-space:nowrap;">3.3</div>
<div style="left:25px;width:600px;text-align:right;top:583px;font-size:10.5px;line-height:12px;font-weight:700;color:#000;white-space:nowrap;">3.9</div>
<div style="left:95px;width:600px;text-align:right;top:583px;font-size:10.5px;line-height:12px;font-weight:700;color:#000;white-space:nowrap;">3.3</div>
<div style="left:165px;width:600px;text-align:right;top:583px;font-size:10.5px;line-height:12px;font-weight:700;color:#000;white-space:nowrap;">3.1</div>
<div style="left:235px;width:600px;text-align:right;top:583px;font-size:10.5px;line-height:12px;font-weight:700;color:#000;white-space:nowrap;">3.5</div>
<div style="left:305px;width:600px;text-align:right;top:583px;font-size:10.5px;line-height:12px;font-weight:700;color:#000;white-space:nowrap;">3.9</div>
<div style="left:375px;width:600px;text-align:right;top:583px;font-size:10.5px;line-height:12px;font-weight:700;color:#000;white-space:nowrap;">3.3</div>
<div style="left:445px;width:600px;text-align:right;top:583px;font-size:10.5px;line-height:12px;font-weight:700;color:#000;white-space:nowrap;">3.3</div>
<div style="left:506px;width:600px;text-align:right;top:583px;font-size:10.5px;line-height:12px;font-weight:700;color:#000;white-space:nowrap;">3.4</div>
<div style="left:1050px;top:597px;width:62px;height:13px;background:#d9d9d9"></div>
<div style="left:38px;top:610px;width:1074px;height:1px;background:repeating-linear-gradient(90deg,#b8b8b8 0 1px,transparent 1px 2px)"></div>
<div style="left:41px;top:598px;font-size:10.2px;line-height:11px;font-weight:700;color:#000;white-space:nowrap;">2020 Actual</div>
<div style="left:-325px;width:600px;text-align:right;top:597px;font-size:10.5px;line-height:12px;font-weight:700;color:#000;white-space:nowrap;">3.2</div>
<div style="left:-255px;width:600px;text-align:right;top:597px;font-size:10.5px;line-height:12px;font-weight:700;color:#000;white-space:nowrap;">3.1</div>
<div style="left:-185px;width:600px;text-align:right;top:597px;font-size:10.5px;line-height:12px;font-weight:700;color:#000;white-space:nowrap;">3.4</div>
<div style="left:-115px;width:600px;text-align:right;top:597px;font-size:10.5px;line-height:12px;font-weight:700;color:#000;white-space:nowrap;">3.6</div>
<div style="left:-45px;width:600px;text-align:right;top:597px;font-size:10.5px;line-height:12px;font-weight:700;color:#000;white-space:nowrap;">3.8</div>
<div style="left:25px;width:600px;text-align:right;top:597px;font-size:10.5px;line-height:12px;font-weight:700;color:#000;white-space:nowrap;">3.6</div>
<div style="left:95px;width:600px;text-align:right;top:597px;font-size:10.5px;line-height:12px;font-weight:700;color:#000;white-space:nowrap;">2.9</div>
<div style="left:506px;width:600px;text-align:right;top:597px;font-size:10.5px;line-height:12px;font-weight:700;color:#000;white-space:nowrap;">3.3</div>
<div style="left:1050px;top:611px;width:62px;height:13px;background:#d9d9d9"></div>
<div style="left:38px;top:624px;width:1074px;height:1px;background:repeating-linear-gradient(90deg,#b8b8b8 0 1px,transparent 1px 2px)"></div>
<div style="left:41px;top:612px;font-size:10.2px;line-height:11px;font-weight:700;color:#000;white-space:nowrap;">Forecast</div>
<div style="left:-325px;width:600px;text-align:right;top:611px;font-size:10.5px;line-height:12px;font-weight:700;color:#000;white-space:nowrap;">3.2</div>
<div style="left:-255px;width:600px;text-align:right;top:611px;font-size:10.5px;line-height:12px;font-weight:700;color:#000;white-space:nowrap;">3.1</div>
<div style="left:-185px;width:600px;text-align:right;top:611px;font-size:10.5px;line-height:12px;font-weight:700;color:#000;white-space:nowrap;">3.4</div>
<div style="left:-115px;width:600px;text-align:right;top:611px;font-size:10.5px;line-height:12px;font-weight:700;color:#000;white-space:nowrap;">3.6</div>
<div style="left:-45px;width:600px;text-align:right;top:611px;font-size:10.5px;line-height:12px;font-weight:700;color:#000;white-space:nowrap;">3.8</div>
<div style="left:25px;width:600px;text-align:right;top:611px;font-size:10.5px;line-height:12px;font-weight:700;color:#000;white-space:nowrap;">3.6</div>
<div style="left:95px;width:600px;text-align:right;top:611px;font-size:10.5px;line-height:12px;font-weight:700;color:#000;white-space:nowrap;">2.9</div>
<div style="left:165px;width:600px;text-align:right;top:611px;font-size:10.5px;line-height:12px;font-weight:700;color:#000;white-space:nowrap;">3.3</div>
<div style="left:235px;width:600px;text-align:right;top:611px;font-size:10.5px;line-height:12px;font-weight:700;color:#000;white-space:nowrap;">3.3</div>
<div style="left:305px;width:600px;text-align:right;top:611px;font-size:10.5px;line-height:12px;font-weight:700;color:#000;white-space:nowrap;">3.3</div>
<div style="left:375px;width:600px;text-align:right;top:611px;font-size:10.5px;line-height:12px;font-weight:700;color:#000;white-space:nowrap;">3.3</div>
<div style="left:445px;width:600px;text-align:right;top:611px;font-size:10.5px;line-height:12px;font-weight:700;color:#000;white-space:nowrap;">3.3</div>
<div style="left:506px;width:600px;text-align:right;top:611px;font-size:10.5px;line-height:12px;font-weight:700;color:#000;white-space:nowrap;">3.3</div>
<div style="left:1128.5px;top:298px;font-size:12.3px;line-height:14px;font-weight:700;color:#000;white-space:nowrap;">Units</div>
<div style="left:1125px;top:312px;width:321px;height:18px;background:#53b27e"></div>
<div style="left:1125px;top:312px;width:322px;height:1px;background:#000"></div>
<div style="left:1125px;top:398px;width:322px;height:1px;background:#000"></div>
<div style="left:1125px;top:312px;width:1px;height:87px;background:#000"></div>
<div style="left:1446px;top:312px;width:1px;height:87px;background:#000"></div>
<div style="left:1125px;top:330px;width:269px;height:1px;background:#000"></div>
<div style="left:1342px;top:312px;width:1px;height:86px;background:#000"></div>
<div style="left:1394px;top:312px;width:1px;height:86px;background:#000"></div>
<div style="left:1131px;top:319px;font-size:9.2px;line-height:10px;font-weight:700;color:#f2f2f2;white-space:nowrap;">Forecast based on:</div>
<div style="left:1068.0px;width:600px;text-align:center;top:318px;font-size:9.6px;line-height:11px;font-weight:700;color:#f2f2f2;white-space:nowrap;">FY</div>
<div style="left:1120.5px;width:600px;text-align:center;top:318px;font-size:9.6px;line-height:11px;font-weight:700;color:#f2f2f2;white-space:nowrap;">vs. LO</div>
<div style="left:1128.5px;top:335px;font-size:9.75px;line-height:11px;font-weight:700;color:#000;white-space:nowrap;">3-month Rolling Rate</div>
<div style="left:1068.0px;width:600px;text-align:center;top:336px;font-size:9.3px;line-height:10px;font-weight:400;color:#000;white-space:nowrap;">#VALUE!</div>
<div style="left:1120.5px;width:600px;text-align:center;top:336px;font-size:9.3px;line-height:10px;font-weight:700;color:#000;white-space:nowrap;">#VALUE!</div>
<svg style="left:1343px;top:331px;" width="6" height="6" viewBox="0 0 6 6"><path d="M0 0 H6 L0 6 Z" fill="#187a2f"/></svg>
<svg style="left:1395px;top:331px;" width="6" height="6" viewBox="0 0 6 6"><path d="M0 0 H6 L0 6 Z" fill="#187a2f"/></svg>
<div style="left:1128.5px;top:352px;font-size:9.75px;line-height:11px;font-weight:700;color:#000;white-space:nowrap;">2020 Trend 6 months</div>
<div style="left:1068.0px;width:600px;text-align:center;top:353px;font-size:9.3px;line-height:10px;font-weight:400;color:#000;white-space:nowrap;">#VALUE!</div>
<div style="left:1120.5px;width:600px;text-align:center;top:353px;font-size:9.3px;line-height:10px;font-weight:700;color:#000;white-space:nowrap;">#VALUE!</div>
<svg style="left:1343px;top:348px;" width="6" height="6" viewBox="0 0 6 6"><path d="M0 0 H6 L0 6 Z" fill="#187a2f"/></svg>
<svg style="left:1395px;top:348px;" width="6" height="6" viewBox="0 0 6 6"><path d="M0 0 H6 L0 6 Z" fill="#187a2f"/></svg>
<div style="left:1128.5px;top:369px;font-size:9.75px;line-height:11px;font-weight:700;color:#000;white-space:nowrap;">2020 Trend 12 months</div>
<div style="left:1068.0px;width:600px;text-align:center;top:370px;font-size:9.3px;line-height:10px;font-weight:400;color:#000;white-space:nowrap;">#VALUE!</div>
<div style="left:1120.5px;width:600px;text-align:center;top:370px;font-size:9.3px;line-height:10px;font-weight:700;color:#000;white-space:nowrap;">#VALUE!</div>
<svg style="left:1343px;top:365px;" width="6" height="6" viewBox="0 0 6 6"><path d="M0 0 H6 L0 6 Z" fill="#187a2f"/></svg>
<svg style="left:1395px;top:365px;" width="6" height="6" viewBox="0 0 6 6"><path d="M0 0 H6 L0 6 Z" fill="#187a2f"/></svg>
<div style="left:1128.5px;top:386px;font-size:9.75px;line-height:11px;font-weight:700;color:#000;white-space:nowrap;">Prior Year exit rate (Q4 x 4)</div>
<div style="left:788px;width:600px;text-align:right;top:386px;font-size:10.3px;line-height:11px;font-weight:400;color:#000;white-space:nowrap;">832</div>
<div style="left:1120.5px;width:600px;text-align:center;top:386px;font-size:10px;line-height:11px;font-weight:700;color:#ff0000;white-space:nowrap;">-264</div>
<div style="left:1125px;top:430px;width:321px;height:18px;background:#53b27e"></div>
<div style="left:1125px;top:430px;width:322px;height:1px;background:#000"></div>
<div style="left:1125px;top:478px;width:322px;height:1px;background:#000"></div>
<div style="left:1125px;top:430px;width:1px;height:49px;background:#000"></div>
<div style="left:1446px;top:430px;width:1px;height:49px;background:#000"></div>
<div style="left:1290px;top:430px;width:1px;height:48px;background:#000"></div>
<div style="left:1394px;top:430px;width:1px;height:48px;background:#000"></div>
<div style="left:1128.5px;top:436px;font-size:9.6px;line-height:11px;font-weight:700;color:#f2f2f2;white-space:nowrap;">Growth vs PY</div>
<div style="left:1016.0px;width:600px;text-align:center;top:436px;font-size:9.6px;line-height:11px;font-weight:700;color:#f2f2f2;white-space:nowrap;">YTD</div>
<div style="left:1068.0px;width:600px;text-align:center;top:436px;font-size:9.6px;line-height:11px;font-weight:700;color:#f2f2f2;white-space:nowrap;">YTG</div>
<div style="left:1120.5px;width:600px;text-align:center;top:436px;font-size:9.6px;line-height:11px;font-weight:700;color:#f2f2f2;white-space:nowrap;">Delta</div>
<div style="left:1128.5px;top:451px;font-size:10px;line-height:11px;font-weight:700;color:#000;white-space:nowrap;">GR%</div>
<div style="left:1128.5px;top:467px;font-size:10px;line-height:11px;font-weight:700;color:#000;white-space:nowrap;">Avg. packs per month</div>
<div style="left:1068.0px;width:600px;text-align:center;top:452px;font-size:9.3px;line-height:10px;font-weight:700;color:#000;white-space:nowrap;">#VALUE!</div>
<svg style="left:1343px;top:449px;" width="6" height="6" viewBox="0 0 6 6"><path d="M0 0 H6 L0 6 Z" fill="#187a2f"/></svg>
<div style="left:1125px;top:508px;width:321px;height:14px;background:#53b27e"></div>
<div style="left:1125px;top:508px;width:322px;height:1px;background:#000"></div>
<div style="left:1125px;top:596px;width:322px;height:1px;background:#000"></div>
<div style="left:1125px;top:508px;width:1px;height:89px;background:#000"></div>
<div style="left:1446px;top:508px;width:1px;height:89px;background:#000"></div>
<div style="left:1125px;top:522px;width:321px;height:1px;background:#000"></div>
<div style="left:1128.5px;top:511px;font-size:9.6px;line-height:11px;font-weight:700;color:#f2f2f2;white-space:nowrap;">Units</div>
<div style="left:964.0px;width:600px;text-align:center;top:511px;font-size:9.6px;line-height:11px;font-weight:700;color:#f2f2f2;white-space:nowrap;">Q1</div>
<div style="left:1016.0px;width:600px;text-align:center;top:511px;font-size:9.6px;line-height:11px;font-weight:700;color:#f2f2f2;white-space:nowrap;">Q2</div>
<div style="left:1068.0px;width:600px;text-align:center;top:511px;font-size:9.6px;line-height:11px;font-weight:700;color:#f2f2f2;white-space:nowrap;">Q3</div>
<div style="left:1120.5px;width:600px;text-align:center;top:511px;font-size:9.6px;line-height:11px;font-weight:700;color:#f2f2f2;white-space:nowrap;">Q4</div>
<div style="left:1128.5px;top:525px;font-size:10.2px;line-height:11px;font-weight:700;color:#000;white-space:nowrap;">2018 Actual</div>
<div style="left:684.5px;width:600px;text-align:right;top:524px;font-size:10.3px;line-height:11px;font-weight:400;color:#000;white-space:nowrap;">178</div>
<div style="left:736.5px;width:600px;text-align:right;top:524px;font-size:10.3px;line-height:11px;font-weight:400;color:#000;white-space:nowrap;">206</div>
<div style="left:788.5px;width:600px;text-align:right;top:524px;font-size:10.3px;line-height:11px;font-weight:400;color:#000;white-space:nowrap;">244</div>
<div style="left:841.5px;width:600px;text-align:right;top:524px;font-size:10.3px;line-height:11px;font-weight:400;color:#000;white-space:nowrap;">246</div>
<div style="left:1128.5px;top:543px;font-size:10.2px;line-height:11px;font-weight:700;color:#000;white-space:nowrap;">2019 Actual</div>
<div style="left:684.5px;width:600px;text-align:right;top:540px;font-size:10.3px;line-height:11px;font-weight:400;color:#000;white-space:nowrap;">256</div>
<div style="left:736.5px;width:600px;text-align:right;top:540px;font-size:10.3px;line-height:11px;font-weight:400;color:#000;white-space:nowrap;">260</div>
<div style="left:788.5px;width:600px;text-align:right;top:540px;font-size:10.3px;line-height:11px;font-weight:400;color:#000;white-space:nowrap;">256</div>
<div style="left:841.5px;width:600px;text-align:right;top:540px;font-size:10.3px;line-height:11px;font-weight:400;color:#000;white-space:nowrap;">208</div>
<div style="left:1128.5px;top:557px;font-size:10.2px;line-height:11px;font-weight:700;color:#000;white-space:nowrap;">2020 Budget</div>
<div style="left:684.5px;width:600px;text-align:right;top:556px;font-size:10.3px;line-height:11px;font-weight:400;color:#000;white-space:nowrap;">272</div>
<div style="left:736.5px;width:600px;text-align:right;top:556px;font-size:10.3px;line-height:11px;font-weight:400;color:#000;white-space:nowrap;">271</div>
<div style="left:788.5px;width:600px;text-align:right;top:556px;font-size:10.3px;line-height:11px;font-weight:400;color:#000;white-space:nowrap;">284</div>
<div style="left:841.5px;width:600px;text-align:right;top:556px;font-size:10.3px;line-height:11px;font-weight:400;color:#000;white-space:nowrap;">269</div>
<div style="left:1128.5px;top:571px;font-size:10.2px;line-height:11px;font-weight:700;color:#000;white-space:nowrap;">2020 Actual</div>
<div style="left:684.5px;width:600px;text-align:right;top:570px;font-size:10.3px;line-height:11px;font-weight:400;color:#000;white-space:nowrap;">290</div>
<div style="left:736.5px;width:600px;text-align:right;top:570px;font-size:10.3px;line-height:11px;font-weight:400;color:#000;white-space:nowrap;">250</div>
<div style="left:788.5px;width:600px;text-align:right;top:570px;font-size:10.3px;line-height:11px;font-weight:400;color:#000;white-space:nowrap;">122</div>
<div style="left:1426px;top:570px;font-size:10.3px;line-height:11px;font-weight:400;color:#000;white-space:nowrap;">-</div>
<div style="left:1128.5px;top:585px;font-size:10.2px;line-height:11px;font-weight:700;color:#000;white-space:nowrap;">Forecast</div>
<div style="left:684.5px;width:600px;text-align:right;top:584px;font-size:10.3px;line-height:11px;font-weight:400;color:#000;white-space:nowrap;">290</div>
<div style="left:736.5px;width:600px;text-align:right;top:584px;font-size:10.3px;line-height:11px;font-weight:400;color:#000;white-space:nowrap;">250</div>
<div style="left:788.5px;width:600px;text-align:right;top:584px;font-size:10.3px;line-height:11px;font-weight:400;color:#000;white-space:nowrap;">304</div>
<div style="left:841.5px;width:600px;text-align:right;top:584px;font-size:10.3px;line-height:11px;font-weight:400;color:#000;white-space:nowrap;">284</div>
<div style="left:1125px;top:610px;width:321px;height:14px;background:#53b27e"></div>
<div style="left:1125px;top:610px;width:322px;height:1px;background:#000"></div>
<div style="left:1125px;top:666px;width:322px;height:1px;background:#000"></div>
<div style="left:1125px;top:610px;width:1px;height:57px;background:#000"></div>
<div style="left:1446px;top:610px;width:1px;height:57px;background:#000"></div>
<div style="left:1128.5px;top:613px;font-size:9.6px;line-height:11px;font-weight:700;color:#f2f2f2;white-space:nowrap;">Quarter Actuals</div>
<div style="left:964.0px;width:600px;text-align:center;top:613px;font-size:9.6px;line-height:11px;font-weight:700;color:#f2f2f2;white-space:nowrap;">Q1</div>
<div style="left:1016.0px;width:600px;text-align:center;top:613px;font-size:9.6px;line-height:11px;font-weight:700;color:#f2f2f2;white-space:nowrap;">Q2</div>
<div style="left:1068.0px;width:600px;text-align:center;top:613px;font-size:9.6px;line-height:11px;font-weight:700;color:#f2f2f2;white-space:nowrap;">Q3</div>
<div style="left:1120.5px;width:600px;text-align:center;top:613px;font-size:9.6px;line-height:11px;font-weight:700;color:#f2f2f2;white-space:nowrap;">Q4</div>
<div style="left:1128.5px;top:627px;font-size:10.2px;line-height:11px;font-weight:700;color:#000;white-space:nowrap;">vs 2018</div>
<div style="left:964.0px;width:600px;text-align:center;top:627px;font-size:10px;line-height:11px;font-weight:700;color:#0b800b;white-space:nowrap;">62.9%</div>
<div style="left:1016.0px;width:600px;text-align:center;top:627px;font-size:10px;line-height:11px;font-weight:700;color:#0b800b;white-space:nowrap;">21.4%</div>
<div style="left:1068.0px;width:600px;text-align:center;top:627px;font-size:10px;line-height:11px;font-weight:700;color:#ff0000;white-space:nowrap;">-50.0%</div>
<div style="left:1120.5px;width:600px;text-align:center;top:627px;font-size:10px;line-height:11px;font-weight:700;color:#ff0000;white-space:nowrap;">-100.0%</div>
<div style="left:1128.5px;top:641px;font-size:10.2px;line-height:11px;font-weight:700;color:#000;white-space:nowrap;">vs 2019</div>
<div style="left:964.0px;width:600px;text-align:center;top:641px;font-size:10px;line-height:11px;font-weight:700;color:#0b800b;white-space:nowrap;">13.3%</div>
<div style="left:1016.0px;width:600px;text-align:center;top:641px;font-size:10px;line-height:11px;font-weight:700;color:#ff0000;white-space:nowrap;">-3.8%</div>
<div style="left:1068.0px;width:600px;text-align:center;top:641px;font-size:10px;line-height:11px;font-weight:700;color:#ff0000;white-space:nowrap;">-52.3%</div>
<div style="left:1120.5px;width:600px;text-align:center;top:641px;font-size:10px;line-height:11px;font-weight:700;color:#ff0000;white-space:nowrap;">-100.0%</div>
<div style="left:1128.5px;top:655px;font-size:10.2px;line-height:11px;font-weight:700;color:#000;white-space:nowrap;">Forecast vs. 2019</div>
<div style="left:964.0px;width:600px;text-align:center;top:655px;font-size:10px;line-height:11px;font-weight:700;color:#0b800b;white-space:nowrap;">13.3%</div>
<div style="left:1016.0px;width:600px;text-align:center;top:655px;font-size:10px;line-height:11px;font-weight:700;color:#ff0000;white-space:nowrap;">-3.8%</div>
<div style="left:1068.0px;width:600px;text-align:center;top:655px;font-size:10px;line-height:11px;font-weight:700;color:#0b800b;white-space:nowrap;">18.9%</div>
<div style="left:1120.5px;width:600px;text-align:center;top:655px;font-size:10px;line-height:11px;font-weight:700;color:#0b800b;white-space:nowrap;">36.5%</div>
<div style="left:1125px;top:680px;width:321px;height:14px;background:#53b27e"></div>
<div style="left:1125px;top:680px;width:322px;height:1px;background:#000"></div>
<div style="left:1125px;top:740px;width:322px;height:1px;background:#000"></div>
<div style="left:1125px;top:680px;width:1px;height:61px;background:#000"></div>
<div style="left:1446px;top:680px;width:1px;height:61px;background:#000"></div>
<div style="left:1128.5px;top:683px;font-size:9.6px;line-height:11px;font-weight:700;color:#f2f2f2;white-space:nowrap;">Quarter Actuals</div>
<div style="left:964.0px;width:600px;text-align:center;top:683px;font-size:9.6px;line-height:11px;font-weight:700;color:#f2f2f2;white-space:nowrap;">Q1</div>
<div style="left:1016.0px;width:600px;text-align:center;top:683px;font-size:9.6px;line-height:11px;font-weight:700;color:#f2f2f2;white-space:nowrap;">Q2</div>
<div style="left:1068.0px;width:600px;text-align:center;top:683px;font-size:9.6px;line-height:11px;font-weight:700;color:#f2f2f2;white-space:nowrap;">Q3</div>
<div style="left:1120.5px;width:600px;text-align:center;top:683px;font-size:9.6px;line-height:11px;font-weight:700;color:#f2f2f2;white-space:nowrap;">Q4</div>
<div style="left:1128.5px;top:697px;font-size:10.2px;line-height:11px;font-weight:700;color:#000;white-space:nowrap;">vs 2018</div>
<div style="left:964.0px;width:600px;text-align:center;top:697px;font-size:10px;line-height:11px;font-weight:700;color:#0b800b;white-space:nowrap;">+112</div>
<div style="left:1016.0px;width:600px;text-align:center;top:697px;font-size:10px;line-height:11px;font-weight:700;color:#0b800b;white-space:nowrap;">+44</div>
<div style="left:1068.0px;width:600px;text-align:center;top:697px;font-size:10px;line-height:11px;font-weight:700;color:#ff0000;white-space:nowrap;">-122</div>
<div style="left:1120.5px;width:600px;text-align:center;top:697px;font-size:10px;line-height:11px;font-weight:700;color:#ff0000;white-space:nowrap;">-246</div>
<div style="left:1128.5px;top:711px;font-size:10.2px;line-height:11px;font-weight:700;color:#000;white-space:nowrap;">vs 2019</div>
<div style="left:964.0px;width:600px;text-align:center;top:711px;font-size:10px;line-height:11px;font-weight:700;color:#0b800b;white-space:nowrap;">+34</div>
<div style="left:1016.0px;width:600px;text-align:center;top:711px;font-size:10px;line-height:11px;font-weight:700;color:#ff0000;white-space:nowrap;">-10</div>
<div style="left:1068.0px;width:600px;text-align:center;top:711px;font-size:10px;line-height:11px;font-weight:700;color:#ff0000;white-space:nowrap;">-134</div>
<div style="left:1120.5px;width:600px;text-align:center;top:711px;font-size:10px;line-height:11px;font-weight:700;color:#ff0000;white-space:nowrap;">-208</div>
<div style="left:1128.5px;top:729px;font-size:10.2px;line-height:11px;font-weight:700;color:#000;white-space:nowrap;">Forecast vs. 2019</div>
<div style="left:964.0px;width:600px;text-align:center;top:729px;font-size:10px;line-height:11px;font-weight:700;color:#0b800b;white-space:nowrap;">+34</div>
<div style="left:1016.0px;width:600px;text-align:center;top:729px;font-size:10px;line-height:11px;font-weight:700;color:#ff0000;white-space:nowrap;">-10</div>
<div style="left:1068.0px;width:600px;text-align:center;top:729px;font-size:10px;line-height:11px;font-weight:700;color:#0b800b;white-space:nowrap;">+48</div>
<div style="left:1120.5px;width:600px;text-align:center;top:729px;font-size:10px;line-height:11px;font-weight:700;color:#0b800b;white-space:nowrap;">+76</div>
<div style="left:1125px;top:758px;width:321px;height:14px;background:#53b27e"></div>
<div style="left:1125px;top:758px;width:322px;height:1px;background:#000"></div>
<div style="left:1125px;top:828px;width:322px;height:1px;background:#000"></div>
<div style="left:1125px;top:758px;width:1px;height:71px;background:#000"></div>
<div style="left:1446px;top:758px;width:1px;height:71px;background:#000"></div>
<div style="left:1128.5px;top:761px;font-size:9.6px;line-height:11px;font-weight:700;color:#f2f2f2;white-space:nowrap;">QoQ GR%</div>
<div style="left:964.0px;width:600px;text-align:center;top:761px;font-size:9.6px;line-height:11px;font-weight:700;color:#f2f2f2;white-space:nowrap;">Q1</div>
<div style="left:1016.0px;width:600px;text-align:center;top:761px;font-size:9.6px;line-height:11px;font-weight:700;color:#f2f2f2;white-space:nowrap;">Q2</div>
<div style="left:1068.0px;width:600px;text-align:center;top:761px;font-size:9.6px;line-height:11px;font-weight:700;color:#f2f2f2;white-space:nowrap;">Q3</div>
<div style="left:1120.5px;width:600px;text-align:center;top:761px;font-size:9.6px;line-height:11px;font-weight:700;color:#f2f2f2;white-space:nowrap;">Q4</div>
<div style="left:1128.5px;top:775px;font-size:10.2px;line-height:11px;font-weight:700;color:#000;white-space:nowrap;">2019 Actual</div>
<div style="left:964.0px;width:600px;text-align:center;top:775px;font-size:10px;line-height:11px;font-weight:700;color:#0b800b;white-space:nowrap;">4.1%</div>
<div style="left:1016.0px;width:600px;text-align:center;top:775px;font-size:10px;line-height:11px;font-weight:700;color:#0b800b;white-space:nowrap;">1.6%</div>
<div style="left:1068.0px;width:600px;text-align:center;top:775px;font-size:10px;line-height:11px;font-weight:700;color:#ff0000;white-space:nowrap;">-1.5%</div>
<div style="left:1120.5px;width:600px;text-align:center;top:775px;font-size:10px;line-height:11px;font-weight:700;color:#ff0000;white-space:nowrap;">-18.8%</div>
<div style="left:1128.5px;top:789px;font-size:10.2px;line-height:11px;font-weight:700;color:#000;white-space:nowrap;">2020 Budget</div>
<div style="left:964.0px;width:600px;text-align:center;top:789px;font-size:10px;line-height:11px;font-weight:700;color:#0b800b;white-space:nowrap;">30.6%</div>
<div style="left:1016.0px;width:600px;text-align:center;top:789px;font-size:10px;line-height:11px;font-weight:700;color:#ff0000;white-space:nowrap;">-0.1%</div>
<div style="left:1068.0px;width:600px;text-align:center;top:789px;font-size:10px;line-height:11px;font-weight:700;color:#0b800b;white-space:nowrap;">4.5%</div>
<div style="left:1120.5px;width:600px;text-align:center;top:789px;font-size:10px;line-height:11px;font-weight:700;color:#ff0000;white-space:nowrap;">-5.0%</div>
<div style="left:1128.5px;top:803px;font-size:10.2px;line-height:11px;font-weight:700;color:#000;white-space:nowrap;">2020 Actual</div>
<div style="left:964.0px;width:600px;text-align:center;top:803px;font-size:10px;line-height:11px;font-weight:700;color:#0b800b;white-space:nowrap;">39.4%</div>
<div style="left:1016.0px;width:600px;text-align:center;top:803px;font-size:10px;line-height:11px;font-weight:700;color:#ff0000;white-space:nowrap;">-13.8%</div>
<div style="left:1068.0px;width:600px;text-align:center;top:803px;font-size:10px;line-height:11px;font-weight:700;color:#ff0000;white-space:nowrap;">-51.2%</div>
<div style="left:1128.5px;top:817px;font-size:10.2px;line-height:11px;font-weight:700;color:#000;white-space:nowrap;">Forecast</div>
<div style="left:964.0px;width:600px;text-align:center;top:817px;font-size:10px;line-height:11px;font-weight:700;color:#0b800b;white-space:nowrap;">39.4%</div>
<div style="left:1016.0px;width:600px;text-align:center;top:817px;font-size:10px;line-height:11px;font-weight:700;color:#ff0000;white-space:nowrap;">-13.8%</div>
<div style="left:1068.0px;width:600px;text-align:center;top:817px;font-size:10px;line-height:11px;font-weight:700;color:#0b800b;white-space:nowrap;">21.7%</div>
<div style="left:1120.5px;width:600px;text-align:center;top:817px;font-size:10px;line-height:11px;font-weight:700;color:#ff0000;white-space:nowrap;">-6.7%</div>
<svg style="left:1291px;top:801px;" width="6" height="6" viewBox="0 0 6 6"><path d="M0 0 H6 L0 6 Z" fill="#187a2f"/></svg>
<svg style="left:1343px;top:801px;" width="6" height="6" viewBox="0 0 6 6"><path d="M0 0 H6 L0 6 Z" fill="#187a2f"/></svg>
<svg style="left:1395px;top:801px;" width="6" height="6" viewBox="0 0 6 6"><path d="M0 0 H6 L0 6 Z" fill="#187a2f"/></svg>
<div style="left:1467.5px;top:298px;font-size:12.3px;line-height:14px;font-weight:700;color:#000;white-space:nowrap;">Sales in kUSD</div>
<div style="left:1464px;top:312px;width:333px;height:18px;background:#53b27e"></div>
<div style="left:1464px;top:312px;width:334px;height:1px;background:#000"></div>
<div style="left:1464px;top:398px;width:334px;height:1px;background:#000"></div>
<div style="left:1464px;top:312px;width:1px;height:87px;background:#000"></div>
<div style="left:1797px;top:312px;width:1px;height:87px;background:#000"></div>
<div style="left:1464px;top:330px;width:283px;height:1px;background:#000"></div>
<div style="left:1694px;top:312px;width:1px;height:86px;background:#000"></div>
<div style="left:1747px;top:312px;width:1px;height:86px;background:#000"></div>
<div style="left:1470px;top:319px;font-size:9.2px;line-height:10px;font-weight:700;color:#f2f2f2;white-space:nowrap;">Forecast based on:</div>
<div style="left:1420.5px;width:600px;text-align:center;top:318px;font-size:9.6px;line-height:11px;font-weight:700;color:#f2f2f2;white-space:nowrap;">FY</div>
<div style="left:1472.5px;width:600px;text-align:center;top:318px;font-size:9.6px;line-height:11px;font-weight:700;color:#f2f2f2;white-space:nowrap;">vs. LO</div>
<div style="left:1467.5px;top:335px;font-size:9.75px;line-height:11px;font-weight:700;color:#000;white-space:nowrap;">3-month Rolling Rate</div>
<div style="left:1420.5px;width:600px;text-align:center;top:336px;font-size:9.3px;line-height:10px;font-weight:400;color:#000;white-space:nowrap;">#VALUE!</div>
<div style="left:1472.5px;width:600px;text-align:center;top:336px;font-size:9.3px;line-height:10px;font-weight:700;color:#000;white-space:nowrap;">#VALUE!</div>
<svg style="left:1695px;top:331px;" width="6" height="6" viewBox="0 0 6 6"><path d="M0 0 H6 L0 6 Z" fill="#187a2f"/></svg>
<svg style="left:1748px;top:331px;" width="6" height="6" viewBox="0 0 6 6"><path d="M0 0 H6 L0 6 Z" fill="#187a2f"/></svg>
<div style="left:1467.5px;top:352px;font-size:9.75px;line-height:11px;font-weight:700;color:#000;white-space:nowrap;">2020 Trend 6 months</div>
<div style="left:1420.5px;width:600px;text-align:center;top:353px;font-size:9.3px;line-height:10px;font-weight:400;color:#000;white-space:nowrap;">#VALUE!</div>
<div style="left:1472.5px;width:600px;text-align:center;top:353px;font-size:9.3px;line-height:10px;font-weight:700;color:#000;white-space:nowrap;">#VALUE!</div>
<svg style="left:1695px;top:348px;" width="6" height="6" viewBox="0 0 6 6"><path d="M0 0 H6 L0 6 Z" fill="#187a2f"/></svg>
<svg style="left:1748px;top:348px;" width="6" height="6" viewBox="0 0 6 6"><path d="M0 0 H6 L0 6 Z" fill="#187a2f"/></svg>
<div style="left:1467.5px;top:369px;font-size:9.75px;line-height:11px;font-weight:700;color:#000;white-space:nowrap;">2020 Trend 12 months</div>
<div style="left:1420.5px;width:600px;text-align:center;top:370px;font-size:9.3px;line-height:10px;font-weight:400;color:#000;white-space:nowrap;">#VALUE!</div>
<div style="left:1472.5px;width:600px;text-align:center;top:370px;font-size:9.3px;line-height:10px;font-weight:700;color:#000;white-space:nowrap;">#VALUE!</div>
<svg style="left:1695px;top:365px;" width="6" height="6" viewBox="0 0 6 6"><path d="M0 0 H6 L0 6 Z" fill="#187a2f"/></svg>
<svg style="left:1748px;top:365px;" width="6" height="6" viewBox="0 0 6 6"><path d="M0 0 H6 L0 6 Z" fill="#187a2f"/></svg>
<div style="left:1467.5px;top:386px;font-size:9.75px;line-height:11px;font-weight:700;color:#000;white-space:nowrap;">Prior Year exit rate (Q4 x 4)</div>
<div style="left:1141px;width:600px;text-align:right;top:386px;font-size:10.3px;line-height:11px;font-weight:400;color:#000;white-space:nowrap;">2,831</div>
<div style="left:1472.5px;width:600px;text-align:center;top:386px;font-size:10px;line-height:11px;font-weight:700;color:#ff0000;white-space:nowrap;">-850</div>
<div style="left:1464px;top:430px;width:333px;height:18px;background:#53b27e"></div>
<div style="left:1464px;top:430px;width:334px;height:1px;background:#000"></div>
<div style="left:1464px;top:478px;width:334px;height:1px;background:#000"></div>
<div style="left:1464px;top:430px;width:1px;height:49px;background:#000"></div>
<div style="left:1797px;top:430px;width:1px;height:49px;background:#000"></div>
<div style="left:1642px;top:430px;width:1px;height:48px;background:#000"></div>
<div style="left:1747px;top:430px;width:1px;height:48px;background:#000"></div>
<div style="left:1467.5px;top:436px;font-size:9.6px;line-height:11px;font-weight:700;color:#f2f2f2;white-space:nowrap;">Growth vs PY</div>
<div style="left:1368.0px;width:600px;text-align:center;top:436px;font-size:9.6px;line-height:11px;font-weight:700;color:#f2f2f2;white-space:nowrap;">YTD</div>
<div style="left:1420.5px;width:600px;text-align:center;top:436px;font-size:9.6px;line-height:11px;font-weight:700;color:#f2f2f2;white-space:nowrap;">YTG</div>
<div style="left:1472.5px;width:600px;text-align:center;top:436px;font-size:9.6px;line-height:11px;font-weight:700;color:#f2f2f2;white-space:nowrap;">Delta</div>
<div style="left:1467.5px;top:451px;font-size:10px;line-height:11px;font-weight:700;color:#000;white-space:nowrap;">GR%</div>
<div style="left:1467.5px;top:467px;font-size:10px;line-height:11px;font-weight:700;color:#000;white-space:nowrap;">Avg. sales</div>
<div style="left:1368.0px;width:600px;text-align:center;top:468px;font-size:9.3px;line-height:10px;font-weight:400;color:#000;white-space:nowrap;">#VALUE!</div>
<svg style="left:1643px;top:464px;" width="6" height="6" viewBox="0 0 6 6"><path d="M0 0 H6 L0 6 Z" fill="#187a2f"/></svg>
<div style="left:1464px;top:508px;width:333px;height:14px;background:#53b27e"></div>
<div style="left:1464px;top:508px;width:334px;height:1px;background:#000"></div>
<div style="left:1464px;top:596px;width:334px;height:1px;background:#000"></div>
<div style="left:1464px;top:508px;width:1px;height:89px;background:#000"></div>
<div style="left:1797px;top:508px;width:1px;height:89px;background:#000"></div>
<div style="left:1464px;top:522px;width:333px;height:1px;background:#000"></div>
<div style="left:1467.5px;top:511px;font-size:9.6px;line-height:11px;font-weight:700;color:#f2f2f2;white-space:nowrap;">Sales</div>
<div style="left:1310.0px;width:600px;text-align:center;top:511px;font-size:9.6px;line-height:11px;font-weight:700;color:#f2f2f2;white-space:nowrap;">Q1</div>
<div style="left:1368.0px;width:600px;text-align:center;top:511px;font-size:9.6px;line-height:11px;font-weight:700;color:#f2f2f2;white-space:nowrap;">Q2</div>
<div style="left:1420.5px;width:600px;text-align:center;top:511px;font-size:9.6px;line-height:11px;font-weight:700;color:#f2f2f2;white-space:nowrap;">Q3</div>
<div style="left:1472.5px;width:600px;text-align:center;top:511px;font-size:9.6px;line-height:11px;font-weight:700;color:#f2f2f2;white-space:nowrap;">Q4</div>
<div style="left:1467.5px;top:525px;font-size:10.2px;line-height:11px;font-weight:700;color:#000;white-space:nowrap;">2018 Actual</div>
<div style="left:1036.5px;width:600px;text-align:right;top:524px;font-size:10.3px;line-height:11px;font-weight:400;color:#000;white-space:nowrap;">640</div>
<div style="left:1088.5px;width:600px;text-align:right;top:524px;font-size:10.3px;line-height:11px;font-weight:400;color:#000;white-space:nowrap;">674</div>
<div style="left:1141.5px;width:600px;text-align:right;top:524px;font-size:10.3px;line-height:11px;font-weight:400;color:#000;white-space:nowrap;">833</div>
<div style="left:1192.5px;width:600px;text-align:right;top:524px;font-size:10.3px;line-height:11px;font-weight:400;color:#000;white-space:nowrap;">857</div>
<div style="left:1467.5px;top:543px;font-size:10.2px;line-height:11px;font-weight:700;color:#000;white-space:nowrap;">2019 Actual</div>
<div style="left:1036.5px;width:600px;text-align:right;top:540px;font-size:10.3px;line-height:11px;font-weight:400;color:#000;white-space:nowrap;">818</div>
<div style="left:1088.5px;width:600px;text-align:right;top:540px;font-size:10.3px;line-height:11px;font-weight:400;color:#000;white-space:nowrap;">881</div>
<div style="left:1141.5px;width:600px;text-align:right;top:540px;font-size:10.3px;line-height:11px;font-weight:400;color:#000;white-space:nowrap;">869</div>
<div style="left:1192.5px;width:600px;text-align:right;top:540px;font-size:10.3px;line-height:11px;font-weight:400;color:#000;white-space:nowrap;">708</div>
<div style="left:1467.5px;top:557px;font-size:10.2px;line-height:11px;font-weight:700;color:#000;white-space:nowrap;">2020 Budget</div>
<div style="left:1036.5px;width:600px;text-align:right;top:556px;font-size:10.3px;line-height:11px;font-weight:400;color:#000;white-space:nowrap;">861</div>
<div style="left:1088.5px;width:600px;text-align:right;top:556px;font-size:10.3px;line-height:11px;font-weight:400;color:#000;white-space:nowrap;">939</div>
<div style="left:1141.5px;width:600px;text-align:right;top:556px;font-size:10.3px;line-height:11px;font-weight:400;color:#000;white-space:nowrap;">936</div>
<div style="left:1192.5px;width:600px;text-align:right;top:556px;font-size:10.3px;line-height:11px;font-weight:400;color:#000;white-space:nowrap;">945</div>
<div style="left:1467.5px;top:571px;font-size:10.2px;line-height:11px;font-weight:700;color:#000;white-space:nowrap;">2020 Actual</div>
<div style="left:1036.5px;width:600px;text-align:right;top:570px;font-size:10.3px;line-height:11px;font-weight:400;color:#000;white-space:nowrap;">936</div>
<div style="left:1088.5px;width:600px;text-align:right;top:570px;font-size:10.3px;line-height:11px;font-weight:400;color:#000;white-space:nowrap;">919</div>
<div style="left:1141.5px;width:600px;text-align:right;top:570px;font-size:10.3px;line-height:11px;font-weight:400;color:#000;white-space:nowrap;">349</div>
<div style="left:1777px;top:570px;font-size:10.3px;line-height:11px;font-weight:400;color:#000;white-space:nowrap;">-</div>
<div style="left:1467.5px;top:585px;font-size:10.2px;line-height:11px;font-weight:700;color:#000;white-space:nowrap;">Forecast</div>
<div style="left:1036.5px;width:600px;text-align:right;top:584px;font-size:10.3px;line-height:11px;font-weight:400;color:#000;white-space:nowrap;">936</div>
<div style="left:1088.5px;width:600px;text-align:right;top:584px;font-size:10.3px;line-height:11px;font-weight:400;color:#000;white-space:nowrap;">919</div>
<div style="left:1141.5px;width:600px;text-align:right;top:584px;font-size:10.3px;line-height:11px;font-weight:400;color:#000;white-space:nowrap;">955</div>
<div style="left:1192.5px;width:600px;text-align:right;top:584px;font-size:10.3px;line-height:11px;font-weight:400;color:#000;white-space:nowrap;">945</div>
<div style="left:1464px;top:610px;width:333px;height:14px;background:#53b27e"></div>
<div style="left:1464px;top:610px;width:334px;height:1px;background:#000"></div>
<div style="left:1464px;top:666px;width:334px;height:1px;background:#000"></div>
<div style="left:1464px;top:610px;width:1px;height:57px;background:#000"></div>
<div style="left:1797px;top:610px;width:1px;height:57px;background:#000"></div>
<div style="left:1467.5px;top:613px;font-size:9.6px;line-height:11px;font-weight:700;color:#f2f2f2;white-space:nowrap;">Quarter Actuals</div>
<div style="left:1310.0px;width:600px;text-align:center;top:613px;font-size:9.6px;line-height:11px;font-weight:700;color:#f2f2f2;white-space:nowrap;">Q1</div>
<div style="left:1368.0px;width:600px;text-align:center;top:613px;font-size:9.6px;line-height:11px;font-weight:700;color:#f2f2f2;white-space:nowrap;">Q2</div>
<div style="left:1420.5px;width:600px;text-align:center;top:613px;font-size:9.6px;line-height:11px;font-weight:700;color:#f2f2f2;white-space:nowrap;">Q3</div>
<div style="left:1472.5px;width:600px;text-align:center;top:613px;font-size:9.6px;line-height:11px;font-weight:700;color:#f2f2f2;white-space:nowrap;">Q4</div>
<div style="left:1467.5px;top:627px;font-size:10.2px;line-height:11px;font-weight:700;color:#000;white-space:nowrap;">vs 2018</div>
<div style="left:1310.0px;width:600px;text-align:center;top:627px;font-size:10px;line-height:11px;font-weight:700;color:#0b800b;white-space:nowrap;">46.4%</div>
<div style="left:1368.0px;width:600px;text-align:center;top:627px;font-size:10px;line-height:11px;font-weight:700;color:#0b800b;white-space:nowrap;">36.2%</div>
<div style="left:1420.5px;width:600px;text-align:center;top:627px;font-size:10px;line-height:11px;font-weight:700;color:#ff0000;white-space:nowrap;">-58.1%</div>
<div style="left:1472.5px;width:600px;text-align:center;top:627px;font-size:10px;line-height:11px;font-weight:700;color:#ff0000;white-space:nowrap;">-100.0%</div>
<div style="left:1467.5px;top:641px;font-size:10.2px;line-height:11px;font-weight:700;color:#000;white-space:nowrap;">vs 2019</div>
<div style="left:1310.0px;width:600px;text-align:center;top:641px;font-size:10px;line-height:11px;font-weight:700;color:#0b800b;white-space:nowrap;">14.5%</div>
<div style="left:1368.0px;width:600px;text-align:center;top:641px;font-size:10px;line-height:11px;font-weight:700;color:#0b800b;white-space:nowrap;">4.3%</div>
<div style="left:1420.5px;width:600px;text-align:center;top:641px;font-size:10px;line-height:11px;font-weight:700;color:#ff0000;white-space:nowrap;">-59.9%</div>
<div style="left:1472.5px;width:600px;text-align:center;top:641px;font-size:10px;line-height:11px;font-weight:700;color:#ff0000;white-space:nowrap;">-100.0%</div>
<div style="left:1467.5px;top:655px;font-size:10.2px;line-height:11px;font-weight:700;color:#000;white-space:nowrap;">Forecast vs. 2019</div>
<div style="left:1310.0px;width:600px;text-align:center;top:655px;font-size:10px;line-height:11px;font-weight:700;color:#0b800b;white-space:nowrap;">14.5%</div>
<div style="left:1368.0px;width:600px;text-align:center;top:655px;font-size:10px;line-height:11px;font-weight:700;color:#0b800b;white-space:nowrap;">4.3%</div>
<div style="left:1420.5px;width:600px;text-align:center;top:655px;font-size:10px;line-height:11px;font-weight:700;color:#0b800b;white-space:nowrap;">9.9%</div>
<div style="left:1472.5px;width:600px;text-align:center;top:655px;font-size:10px;line-height:11px;font-weight:700;color:#0b800b;white-space:nowrap;">33.5%</div>
<div style="left:1464px;top:680px;width:333px;height:14px;background:#53b27e"></div>
<div style="left:1464px;top:680px;width:334px;height:1px;background:#000"></div>
<div style="left:1464px;top:740px;width:334px;height:1px;background:#000"></div>
<div style="left:1464px;top:680px;width:1px;height:61px;background:#000"></div>
<div style="left:1797px;top:680px;width:1px;height:61px;background:#000"></div>
<div style="left:1467.5px;top:683px;font-size:9.6px;line-height:11px;font-weight:700;color:#f2f2f2;white-space:nowrap;">Quarter Actuals</div>
<div style="left:1310.0px;width:600px;text-align:center;top:683px;font-size:9.6px;line-height:11px;font-weight:700;color:#f2f2f2;white-space:nowrap;">Q1</div>
<div style="left:1368.0px;width:600px;text-align:center;top:683px;font-size:9.6px;line-height:11px;font-weight:700;color:#f2f2f2;white-space:nowrap;">Q2</div>
<div style="left:1420.5px;width:600px;text-align:center;top:683px;font-size:9.6px;line-height:11px;font-weight:700;color:#f2f2f2;white-space:nowrap;">Q3</div>
<div style="left:1472.5px;width:600px;text-align:center;top:683px;font-size:9.6px;line-height:11px;font-weight:700;color:#f2f2f2;white-space:nowrap;">Q4</div>
<div style="left:1467.5px;top:697px;font-size:10.2px;line-height:11px;font-weight:700;color:#000;white-space:nowrap;">vs 2018</div>
<div style="left:1310.0px;width:600px;text-align:center;top:697px;font-size:10px;line-height:11px;font-weight:700;color:#0b800b;white-space:nowrap;">+297</div>
<div style="left:1368.0px;width:600px;text-align:center;top:697px;font-size:10px;line-height:11px;font-weight:700;color:#0b800b;white-space:nowrap;">+244</div>
<div style="left:1420.5px;width:600px;text-align:center;top:697px;font-size:10px;line-height:11px;font-weight:700;color:#ff0000;white-space:nowrap;">-484</div>
<div style="left:1472.5px;width:600px;text-align:center;top:697px;font-size:10px;line-height:11px;font-weight:700;color:#ff0000;white-space:nowrap;">-857</div>
<div style="left:1467.5px;top:711px;font-size:10.2px;line-height:11px;font-weight:700;color:#000;white-space:nowrap;">vs 2019</div>
<div style="left:1310.0px;width:600px;text-align:center;top:711px;font-size:10px;line-height:11px;font-weight:700;color:#0b800b;white-space:nowrap;">+119</div>
<div style="left:1368.0px;width:600px;text-align:center;top:711px;font-size:10px;line-height:11px;font-weight:700;color:#0b800b;white-space:nowrap;">+38</div>
<div style="left:1420.5px;width:600px;text-align:center;top:711px;font-size:10px;line-height:11px;font-weight:700;color:#ff0000;white-space:nowrap;">-520</div>
<div style="left:1472.5px;width:600px;text-align:center;top:711px;font-size:10px;line-height:11px;font-weight:700;color:#ff0000;white-space:nowrap;">-708</div>
<div style="left:1467.5px;top:729px;font-size:10.2px;line-height:11px;font-weight:700;color:#000;white-space:nowrap;">Forecast vs. 2019</div>
<div style="left:1310.0px;width:600px;text-align:center;top:729px;font-size:10px;line-height:11px;font-weight:700;color:#0b800b;white-space:nowrap;">+119</div>
<div style="left:1368.0px;width:600px;text-align:center;top:729px;font-size:10px;line-height:11px;font-weight:700;color:#0b800b;white-space:nowrap;">+38</div>
<div style="left:1420.5px;width:600px;text-align:center;top:729px;font-size:10px;line-height:11px;font-weight:700;color:#0b800b;white-space:nowrap;">+86</div>
<div style="left:1472.5px;width:600px;text-align:center;top:729px;font-size:10px;line-height:11px;font-weight:700;color:#0b800b;white-space:nowrap;">+237</div>
<div style="left:1464px;top:758px;width:333px;height:14px;background:#53b27e"></div>
<div style="left:1464px;top:758px;width:334px;height:1px;background:#000"></div>
<div style="left:1464px;top:828px;width:334px;height:1px;background:#000"></div>
<div style="left:1464px;top:758px;width:1px;height:71px;background:#000"></div>
<div style="left:1797px;top:758px;width:1px;height:71px;background:#000"></div>
<div style="left:1467.5px;top:761px;font-size:9.6px;line-height:11px;font-weight:700;color:#f2f2f2;white-space:nowrap;">QoQ GR%</div>
<div style="left:1310.0px;width:600px;text-align:center;top:761px;font-size:9.6px;line-height:11px;font-weight:700;color:#f2f2f2;white-space:nowrap;">Q1</div>
<div style="left:1368.0px;width:600px;text-align:center;top:761px;font-size:9.6px;line-height:11px;font-weight:700;color:#f2f2f2;white-space:nowrap;">Q2</div>
<div style="left:1420.5px;width:600px;text-align:center;top:761px;font-size:9.6px;line-height:11px;font-weight:700;color:#f2f2f2;white-space:nowrap;">Q3</div>
<div style="left:1472.5px;width:600px;text-align:center;top:761px;font-size:9.6px;line-height:11px;font-weight:700;color:#f2f2f2;white-space:nowrap;">Q4</div>
<div style="left:1467.5px;top:775px;font-size:10.2px;line-height:11px;font-weight:700;color:#000;white-space:nowrap;">2019 Actual</div>
<div style="left:1310.0px;width:600px;text-align:center;top:775px;font-size:10px;line-height:11px;font-weight:700;color:#ff0000;white-space:nowrap;">-4.6%</div>
<div style="left:1368.0px;width:600px;text-align:center;top:775px;font-size:10px;line-height:11px;font-weight:700;color:#0b800b;white-space:nowrap;">7.7%</div>
<div style="left:1420.5px;width:600px;text-align:center;top:775px;font-size:10px;line-height:11px;font-weight:700;color:#ff0000;white-space:nowrap;">-1.3%</div>
<div style="left:1472.5px;width:600px;text-align:center;top:775px;font-size:10px;line-height:11px;font-weight:700;color:#ff0000;white-space:nowrap;">-18.5%</div>
<div style="left:1467.5px;top:789px;font-size:10.2px;line-height:11px;font-weight:700;color:#000;white-space:nowrap;">2020 Budget</div>
<div style="left:1310.0px;width:600px;text-align:center;top:789px;font-size:10px;line-height:11px;font-weight:700;color:#0b800b;white-space:nowrap;">21.6%</div>
<div style="left:1368.0px;width:600px;text-align:center;top:789px;font-size:10px;line-height:11px;font-weight:700;color:#0b800b;white-space:nowrap;">9.1%</div>
<div style="left:1420.5px;width:600px;text-align:center;top:789px;font-size:10px;line-height:11px;font-weight:700;color:#ff0000;white-space:nowrap;">-0.3%</div>
<div style="left:1472.5px;width:600px;text-align:center;top:789px;font-size:10px;line-height:11px;font-weight:700;color:#0b800b;white-space:nowrap;">0.9%</div>
<div style="left:1467.5px;top:803px;font-size:10.2px;line-height:11px;font-weight:700;color:#000;white-space:nowrap;">2020 Actual</div>
<div style="left:1310.0px;width:600px;text-align:center;top:803px;font-size:10px;line-height:11px;font-weight:700;color:#0b800b;white-space:nowrap;">32.3%</div>
<div style="left:1368.0px;width:600px;text-align:center;top:803px;font-size:10px;line-height:11px;font-weight:700;color:#ff0000;white-space:nowrap;">-1.9%</div>
<div style="left:1420.5px;width:600px;text-align:center;top:803px;font-size:10px;line-height:11px;font-weight:700;color:#ff0000;white-space:nowrap;">-62.1%</div>
<div style="left:1467.5px;top:817px;font-size:10.2px;line-height:11px;font-weight:700;color:#000;white-space:nowrap;">Forecast</div>
<div style="left:1310.0px;width:600px;text-align:center;top:817px;font-size:10px;line-height:11px;font-weight:700;color:#0b800b;white-space:nowrap;">32.3%</div>
<div style="left:1368.0px;width:600px;text-align:center;top:817px;font-size:10px;line-height:11px;font-weight:700;color:#ff0000;white-space:nowrap;">-1.9%</div>
<div style="left:1420.5px;width:600px;text-align:center;top:817px;font-size:10px;line-height:11px;font-weight:700;color:#0b800b;white-space:nowrap;">4.0%</div>
<div style="left:1472.5px;width:600px;text-align:center;top:817px;font-size:10px;line-height:11px;font-weight:700;color:#ff0000;white-space:nowrap;">-1.0%</div>
<svg style="left:1643px;top:801px;" width="6" height="6" viewBox="0 0 6 6"><path d="M0 0 H6 L0 6 Z" fill="#187a2f"/></svg>
<svg style="left:1695px;top:801px;" width="6" height="6" viewBox="0 0 6 6"><path d="M0 0 H6 L0 6 Z" fill="#187a2f"/></svg>
<svg style="left:1748px;top:801px;" width="6" height="6" viewBox="0 0 6 6"><path d="M0 0 H6 L0 6 Z" fill="#187a2f"/></svg>
<div style="left:29px;top:636px;width:1077px;height:235px;background:#fff;border:1px solid #000"></div>
<div style="left:266.5px;width:600px;text-align:center;top:646px;font-size:12.3px;line-height:14px;font-weight:700;color:#000;white-space:nowrap;">Units</div>
<svg style="left:29px;top:636px;" width="1076" height="234" viewBox="0 0 1076 234"><path d="M45.599999999999994 25.5 H1064" stroke="#d9d9d9" stroke-width="1"/><path d="M45.599999999999994 50.5 H1064" stroke="#d9d9d9" stroke-width="1"/><path d="M45.599999999999994 74.5 H1064" stroke="#d9d9d9" stroke-width="1"/><path d="M45.599999999999994 98.5 H1064" stroke="#d9d9d9" stroke-width="1"/><path d="M45.599999999999994 123.5 H1064" stroke="#d9d9d9" stroke-width="1"/><path d="M45.599999999999994 147.5 H1064" stroke="#d9d9d9" stroke-width="1"/><path d="M45.599999999999994 171.5 H1064" stroke="#d9d9d9" stroke-width="1"/><path d="M45.599999999999994 195.5 H1064" stroke="#d9d9d9" stroke-width="1"/><path d="M46.5 195.5 V199" stroke="#d9d9d9" stroke-width="1"/><path d="M88.5 195.5 V199" stroke="#d9d9d9" stroke-width="1"/><path d="M130.5 195.5 V199" stroke="#d9d9d9" stroke-width="1"/><path d="M173.5 195.5 V199" stroke="#d9d9d9" stroke-width="1"/><path d="M215.5 195.5 V199" stroke="#d9d9d9" stroke-width="1"/><path d="M258.5 195.5 V199" stroke="#d9d9d9" stroke-width="1"/><path d="M300.5 195.5 V199" stroke="#d9d9d9" stroke-width="1"/><path d="M342.5 195.5 V199" stroke="#d9d9d9" stroke-width="1"/><path d="M385.5 195.5 V199" stroke="#d9d9d9" stroke-width="1"/><path d="M427.5 195.5 V199" stroke="#d9d9d9" stroke-width="1"/><path d="M470.5 195.5 V199" stroke="#d9d9d9" stroke-width="1"/><path d="M512.5 195.5 V199" stroke="#d9d9d9" stroke-width="1"/><path d="M554.5 195.5 V199" stroke="#d9d9d9" stroke-width="1"/><path d="M597.5 195.5 V199" stroke="#d9d9d9" stroke-width="1"/><path d="M639.5 195.5 V199" stroke="#d9d9d9" stroke-width="1"/><path d="M682.5 195.5 V199" stroke="#d9d9d9" stroke-width="1"/><path d="M724.5 195.5 V199" stroke="#d9d9d9" stroke-width="1"/><path d="M766.5 195.5 V199" stroke="#d9d9d9" stroke-width="1"/><path d="M809.5 195.5 V199" stroke="#d9d9d9" stroke-width="1"/><path d="M851.5 195.5 V199" stroke="#d9d9d9" stroke-width="1"/><path d="M894.5 195.5 V199" stroke="#d9d9d9" stroke-width="1"/><path d="M936.5 195.5 V199" stroke="#d9d9d9" stroke-width="1"/><path d="M978.5 195.5 V199" stroke="#d9d9d9" stroke-width="1"/><path d="M1021.5 195.5 V199" stroke="#d9d9d9" stroke-width="1"/><path d="M1063.5 195.5 V199" stroke="#d9d9d9" stroke-width="1"/><polyline points="66.8,61.8 109.2,100.7 151.6,112.9 194.0,103.2 236.4,52.1 278.8,115.3 321.2,83.7 363.6,108.0 406.0,83.7 448.4,125.0 490.8,91.0 533.2,117.7 575.6,195.5" fill="none" stroke="#4eae79" stroke-width="3.2" stroke-linejoin="round" stroke-linecap="round"/><path d="M575.6 194.8 H1042.0" stroke="#303030" stroke-width="2.4" stroke-linecap="round"/><path d="M252 224.5 H282" stroke="#4eae79" stroke-width="3.2" stroke-linecap="round"/><path d="M385 224.5 H394 M403 224.5 H412" stroke="#7f7f7f" stroke-width="3.2" stroke-linecap="round"/><path d="M531 224.5 H540 M550 224.5 H559" stroke="#1f5fa8" stroke-width="3.2" stroke-linecap="round"/><path d="M684 224.5 H714" stroke="#8fd3a7" stroke-width="3.2" stroke-linecap="round"/><path d="M821 224.5 H851" stroke="#404040" stroke-width="3.2" stroke-linecap="round"/></svg>
<div style="left:-535.5px;width:600px;text-align:right;top:657px;font-size:9px;line-height:10px;font-weight:700;color:#262626;white-space:nowrap;">140</div>
<div style="left:-535.5px;width:600px;text-align:right;top:681px;font-size:9px;line-height:10px;font-weight:700;color:#262626;white-space:nowrap;">120</div>
<div style="left:-535.5px;width:600px;text-align:right;top:705px;font-size:9px;line-height:10px;font-weight:700;color:#262626;white-space:nowrap;">100</div>
<div style="left:-535.5px;width:600px;text-align:right;top:730px;font-size:9px;line-height:10px;font-weight:700;color:#262626;white-space:nowrap;">80</div>
<div style="left:-535.5px;width:600px;text-align:right;top:754px;font-size:9px;line-height:10px;font-weight:700;color:#262626;white-space:nowrap;">60</div>
<div style="left:-535.5px;width:600px;text-align:right;top:778px;font-size:9px;line-height:10px;font-weight:700;color:#262626;white-space:nowrap;">40</div>
<div style="left:-535.5px;width:600px;text-align:right;top:802px;font-size:9px;line-height:10px;font-weight:700;color:#262626;white-space:nowrap;">20</div>
<div style="left:-539px;width:600px;text-align:right;top:826px;font-size:9px;line-height:10px;font-weight:700;color:#262626;white-space:nowrap;">-</div>
<div style="left:-204.2px;width:600px;text-align:center;top:840px;font-size:9.2px;line-height:10px;font-weight:400;color:#595959;white-space:nowrap;">Jan 2019</div>
<div style="left:-161.8px;width:600px;text-align:center;top:840px;font-size:9.2px;line-height:10px;font-weight:400;color:#595959;white-space:nowrap;">Feb 2019</div>
<div style="left:-119.4px;width:600px;text-align:center;top:840px;font-size:9.2px;line-height:10px;font-weight:400;color:#595959;white-space:nowrap;">Mar 2019</div>
<div style="left:-77.0px;width:600px;text-align:center;top:840px;font-size:9.2px;line-height:10px;font-weight:400;color:#595959;white-space:nowrap;">Apr 2019</div>
<div style="left:-34.60000000000002px;width:600px;text-align:center;top:840px;font-size:9.2px;line-height:10px;font-weight:400;color:#595959;white-space:nowrap;">May 2019</div>
<div style="left:7.7999999999999545px;width:600px;text-align:center;top:840px;font-size:9.2px;line-height:10px;font-weight:400;color:#595959;white-space:nowrap;">Jun 2019</div>
<div style="left:50.19999999999993px;width:600px;text-align:center;top:840px;font-size:9.2px;line-height:10px;font-weight:400;color:#595959;white-space:nowrap;">Jul 2019</div>
<div style="left:92.60000000000002px;width:600px;text-align:center;top:840px;font-size:9.2px;line-height:10px;font-weight:400;color:#595959;white-space:nowrap;">Aug 2019</div>
<div style="left:135.0px;width:600px;text-align:center;top:840px;font-size:9.2px;line-height:10px;font-weight:400;color:#595959;white-space:nowrap;">Sep 2019</div>
<div style="left:177.39999999999998px;width:600px;text-align:center;top:840px;font-size:9.2px;line-height:10px;font-weight:400;color:#595959;white-space:nowrap;">Oct 2019</div>
<div style="left:219.79999999999995px;width:600px;text-align:center;top:840px;font-size:9.2px;line-height:10px;font-weight:400;color:#595959;white-space:nowrap;">Nov 2019</div>
<div style="left:262.19999999999993px;width:600px;text-align:center;top:840px;font-size:9.2px;line-height:10px;font-weight:400;color:#595959;white-space:nowrap;">Dec 2019</div>
<div style="left:304.6px;width:600px;text-align:center;top:840px;font-size:9.2px;line-height:10px;font-weight:400;color:#595959;white-space:nowrap;">Jan 2020</div>
<div style="left:347.0px;width:600px;text-align:center;top:840px;font-size:9.2px;line-height:10px;font-weight:400;color:#595959;white-space:nowrap;">Feb 2020</div>
<div style="left:389.4px;width:600px;text-align:center;top:840px;font-size:9.2px;line-height:10px;font-weight:400;color:#595959;white-space:nowrap;">Mar 2020</div>
<div style="left:431.79999999999995px;width:600px;text-align:center;top:840px;font-size:9.2px;line-height:10px;font-weight:400;color:#595959;white-space:nowrap;">Apr 2020</div>
<div style="left:474.20000000000005px;width:600px;text-align:center;top:840px;font-size:9.2px;line-height:10px;font-weight:400;color:#595959;white-space:nowrap;">May 2020</div>
<div style="left:516.6px;width:600px;text-align:center;top:840px;font-size:9.2px;line-height:10px;font-weight:400;color:#595959;white-space:nowrap;">Jun 2020</div>
<div style="left:559.0px;width:600px;text-align:center;top:840px;font-size:9.2px;line-height:10px;font-weight:400;color:#595959;white-space:nowrap;">Jul 2020</div>
<div style="left:601.4px;width:600px;text-align:center;top:840px;font-size:9.2px;line-height:10px;font-weight:400;color:#595959;white-space:nowrap;">Aug 2020</div>
<div style="left:643.8px;width:600px;text-align:center;top:840px;font-size:9.2px;line-height:10px;font-weight:400;color:#595959;white-space:nowrap;">Sep 2020</div>
<div style="left:686.2px;width:600px;text-align:center;top:840px;font-size:9.2px;line-height:10px;font-weight:400;color:#595959;white-space:nowrap;">Oct 2020</div>
<div style="left:728.5999999999999px;width:600px;text-align:center;top:840px;font-size:9.2px;line-height:10px;font-weight:400;color:#595959;white-space:nowrap;">Nov 2020</div>
<div style="left:771.0px;width:600px;text-align:center;top:840px;font-size:9.2px;line-height:10px;font-weight:400;color:#595959;white-space:nowrap;">Dec 2020</div>
<div style="left:313.5px;top:856px;font-size:9.2px;line-height:10px;font-weight:400;color:#595959;white-space:nowrap;">Actual</div>
<div style="left:447px;top:856px;font-size:9.2px;line-height:10px;font-weight:400;color:#595959;white-space:nowrap;">Trend 6m</div>
<div style="left:593.5px;top:856px;font-size:9.2px;line-height:10px;font-weight:400;color:#595959;white-space:nowrap;">Trend 12m</div>
<div style="left:745.5px;top:856px;font-size:9.2px;line-height:10px;font-weight:400;color:#595959;white-space:nowrap;">Budget</div>
<div style="left:882px;top:856px;font-size:9.2px;line-height:10px;font-weight:400;color:#595959;white-space:nowrap;">Forecast</div>
<div style="left:30px;top:880px;width:1077px;height:120px;background:#fff;border:1px solid #000"></div>
<div style="left:269.5px;width:600px;text-align:center;top:889px;font-size:12.3px;line-height:14px;font-weight:700;color:#000;white-space:nowrap;">Sales</div>
<svg style="left:30px;top:880px;" width="1076" height="110" viewBox="0 0 1076 110"><path d="M36.599999999999994 27.5 H1059" stroke="#d9d9d9" stroke-width="1"/><path d="M36.599999999999994 47.5 H1059" stroke="#d9d9d9" stroke-width="1"/><path d="M36.599999999999994 67.5 H1059" stroke="#d9d9d9" stroke-width="1"/><path d="M36.599999999999994 87.5 H1059" stroke="#d9d9d9" stroke-width="1"/><path d="M36.599999999999994 107.5 H1059" stroke="#d9d9d9" stroke-width="1"/><polyline points="57.9,54.6 100.5,110.2 143.1,69.4 185.7,67.8 228.3,38.6 270.9,102.2 313.5,55.0 356.1,104.2 398.7,54.6 441.3,110.2 483.9,59.0 526.5,108.6 569.1,187.0" fill="none" stroke="#4eae79" stroke-width="3.2" stroke-linejoin="round" stroke-linecap="round"/></svg>
<div style="left:-543.5px;width:600px;text-align:right;top:902px;font-size:9px;line-height:10px;font-weight:700;color:#262626;white-space:nowrap;">400</div>
<div style="left:-543.5px;width:600px;text-align:right;top:922px;font-size:9px;line-height:10px;font-weight:700;color:#262626;white-space:nowrap;">350</div>
<div style="left:-543.5px;width:600px;text-align:right;top:942px;font-size:9px;line-height:10px;font-weight:700;color:#262626;white-space:nowrap;">300</div>
<div style="left:-543.5px;width:600px;text-align:right;top:962px;font-size:9px;line-height:10px;font-weight:700;color:#262626;white-space:nowrap;">250</div>
<div style="left:-543.5px;width:600px;text-align:right;top:982px;font-size:9px;line-height:10px;font-weight:700;color:#262626;white-space:nowrap;">200</div>
<div style="left:1899px;top:200px;width:21px;height:790px;background:#e6e6e6"></div>
<div style="left:1902px;top:220px;width:15px;height:756px;background:#d9d9d9"></div>
<div style="left:1902px;top:205px;width:15px;height:15px;background:#fff;border:1px solid #b4b4b4"></div>
<svg style="left:1905px;top:210px;" width="9" height="5" viewBox="0 0 9 5"><path d="M0 5 L4.5 0 L9 5 Z" fill="#606060"/></svg>
<div style="left:1902px;top:219px;width:15px;height:346px;background:#fff;border:1px solid #b4b4b4"></div>
<div style="left:1902px;top:976px;width:15px;height:15px;background:#fff;border:1px solid #b4b4b4"></div>
<svg style="left:1905px;top:981px;" width="9" height="5" viewBox="0 0 9 5"><path d="M0 0 L9 0 L4.5 5 Z" fill="#606060"/></svg>
<div style="left:0px;top:990px;width:1920px;height:28px;background:#e6e6e6"></div>
<div style="left:0px;top:990px;width:1899px;height:1px;background:#ababab"></div>
<div style="left:0px;top:1017px;width:1920px;height:1px;background:#cfcfcf"></div>
<svg style="left:26px;top:998px;" width="6" height="10" viewBox="0 0 6 10"><path d="M5 0 L0 5 L5 10 Z" fill="#b8b8b8"/></svg>
<svg style="left:55px;top:998px;" width="6" height="10" viewBox="0 0 6 10"><path d="M0 0 L5 5 L0 10 Z" fill="#b8b8b8"/></svg>
<div style="left:103px;top:993px;width:96px;height:22px;background:#c00000"></div>
<div style="left:-149.0px;width:600px;text-align:center;top:996px;font-size:13.4px;line-height:15px;font-weight:400;color:#ffffff;white-space:nowrap;">Introduction</div>
<div style="left:204px;top:993px;width:74px;height:22px;background:#8fd1a9"></div>
<div style="left:-59.0px;width:600px;text-align:center;top:996px;font-size:13.4px;line-height:15px;font-weight:400;color:#262626;white-space:nowrap;">Mapping</div>
<div style="left:283px;top:993px;width:133px;height:22px;background:#d6d6d6"></div>
<div style="left:49.5px;width:600px;text-align:center;top:996px;font-size:13.4px;line-height:15px;font-weight:400;color:#262626;white-space:nowrap;">Bridges for Trends</div>
<div style="left:421px;top:993px;width:83px;height:22px;background:#8fd1a9"></div>
<div style="left:162.5px;width:600px;text-align:center;top:996px;font-size:13.4px;line-height:15px;font-weight:400;color:#262626;white-space:nowrap;">Sales Data</div>
<div style="left:509px;top:993px;width:81px;height:22px;background:#8fd1a9"></div>
<div style="left:249.5px;width:600px;text-align:center;top:996px;font-size:13.4px;line-height:15px;font-weight:400;color:#262626;white-space:nowrap;">Units sold</div>
<div style="left:595px;top:993px;width:77px;height:22px;background:#53b27e"></div>
<div style="left:333.5px;width:600px;text-align:center;top:996px;font-size:13.4px;line-height:15px;font-weight:400;color:#262626;white-space:nowrap;">Summary</div>
<div style="left:739px;top:993px;width:59px;height:22px;background:#53b27e"></div>
<div style="left:468.5px;width:600px;text-align:center;top:996px;font-size:13.4px;line-height:15px;font-weight:400;color:#262626;white-space:nowrap;">Tables</div>
<div style="left:803px;top:993px;width:65px;height:22px;background:#53b27e"></div>
<div style="left:535.5px;width:600px;text-align:center;top:996px;font-size:13.4px;line-height:15px;font-weight:400;color:#262626;white-space:nowrap;">Kitchen</div>
<div style="left:873px;top:993px;width:88px;height:22px;background:#53b27e"></div>
<div style="left:617.0px;width:600px;text-align:center;top:996px;font-size:13.4px;line-height:15px;font-weight:400;color:#262626;white-space:nowrap;">Accessories</div>
<div style="left:101px;top:993px;width:1px;height:22px;background:#a0a0a0"></div>
<div style="left:201px;top:993px;width:1px;height:22px;background:#a0a0a0"></div>
<div style="left:280px;top:993px;width:1px;height:22px;background:#a0a0a0"></div>
<div style="left:418px;top:993px;width:1px;height:22px;background:#a0a0a0"></div>
<div style="left:506px;top:993px;width:1px;height:22px;background:#a0a0a0"></div>
<div style="left:593px;top:993px;width:1px;height:22px;background:#a0a0a0"></div>
<div style="left:800px;top:993px;width:1px;height:22px;background:#a0a0a0"></div>
<div style="left:871px;top:993px;width:1px;height:22px;background:#a0a0a0"></div>
<div style="left:964px;top:993px;width:1px;height:22px;background:#a0a0a0"></div>
<div style="left:674px;top:990px;width:63px;height:27px;background:#ffffff;border-left:1px solid #ababab;border-right:1px solid #ababab"></div>
<div style="left:677px;top:994px;width:57px;height:18px;background:linear-gradient(#ffffff,#b3dbc2)"></div>
<div style="left:674px;top:1013px;width:63px;height:2px;background:#12652f"></div>
<div style="left:675px;top:1015px;width:61px;height:2px;background:#e6e6e6"></div>
<div style="left:405.0px;width:600px;text-align:center;top:997px;font-size:12px;line-height:14px;font-weight:700;color:#1e6b3c;white-space:nowrap;">Chairs</div>
<svg style="left:996px;top:995px;" width="18" height="18" viewBox="0 0 18 18"><circle cx="9" cy="9" r="8" fill="none" stroke="#707070" stroke-width="1.2"/><path d="M9 4.5 V13.5 M4.5 9 H13.5" stroke="#707070" stroke-width="1.6"/></svg>
<div style="left:1152px;top:1000px;width:2px;height:2px;background:#a0a0a0"></div>
<div style="left:1152px;top:1004px;width:2px;height:2px;background:#a0a0a0"></div>
<div style="left:1152px;top:1008px;width:2px;height:2px;background:#a0a0a0"></div>
<div style="left:1169px;top:997px;width:15px;height:15px;background:#fff;border:1px solid #c6c6c6"></div>
<svg style="left:1174px;top:1001px;" width="5" height="8" viewBox="0 0 5 8"><path d="M4 0 L0 4 L4 8 Z" fill="#505050"/></svg>
<div style="left:1184px;top:997px;width:700px;height:15px;background:#d9d9d9"></div>
<div style="left:1194px;top:997px;width:107px;height:15px;background:#fff;border:1px solid #c6c6c6"></div>
<div style="left:1884px;top:997px;width:15px;height:15px;background:#fff;border:1px solid #c6c6c6"></div>
<svg style="left:1890px;top:1001px;" width="5" height="8" viewBox="0 0 5 8"><path d="M0 0 L4 4 L0 8 Z" fill="#505050"/></svg>
<div style="left:0px;top:1018px;width:1920px;height:22px;background:#f3f3f3"></div>
<div style="left:7.5px;top:1024px;font-size:10.8px;line-height:12px;font-weight:400;color:#404040;white-space:nowrap;">Ready</div>
<div style="left:1620px;top:1018px;width:40px;height:22px;background:#c6c6c6"></div>
<svg style="left:1632px;top:1022px;" width="14" height="14" viewBox="0 0 14 14"><g fill="none" stroke="#606060" stroke-width="1"><rect x="0.5" y="0.5" width="13" height="13"/><path d="M4.5 0.5 V13.5 M9.5 0.5 V13.5 M0.5 4.5 H13.5 M0.5 9.5 H13.5"/></g></svg>
<svg style="left:1672px;top:1022px;" width="15" height="14" viewBox="0 0 15 14"><g fill="none" stroke="#606060" stroke-width="1"><rect x="0.5" y="0.5" width="14" height="13"/><rect x="3.5" y="2.5" width="8" height="9"/><path d="M5 5 H10 M5 7 H10 M5 9 H10"/></g></svg>
<svg style="left:1712px;top:1022px;" width="15" height="14" viewBox="0 0 15 14"><g fill="none" stroke="#606060" stroke-width="1"><rect x="0.5" y="0.5" width="14" height="13"/><path d="M0.5 7.5 H7.5 V0.5 M7.5 4 H11 V0.5"/></g></svg>
<div style="left:1745px;top:1028px;width:10px;height:2px;background:#606060"></div>
<div style="left:1759px;top:1029px;width:100px;height:1px;background:#b0b0b0"></div>
<div style="left:1799px;top:1023px;width:4px;height:12px;background:#606060"></div>
<div style="left:1808px;top:1026px;width:1px;height:6px;background:#b0b0b0"></div>
<div style="left:1863px;top:1028px;width:10px;height:2px;background:#606060"></div>
<div style="left:1867px;top:1024px;width:2px;height:10px;background:#606060"></div>
<div style="left:1306px;width:600px;text-align:right;top:1024px;font-size:11.5px;line-height:12px;font-weight:400;color:#404040;white-space:nowrap;">85%</div>
<div style="left:0px;top:1040px;width:1920px;height:8px;background:#d6e2ea"></div>
<div style="left:48px;top:1040px;width:344px;height:8px;background:#ffffff"></div>
<div style="left:838px;top:1040px;width:40px;height:8px;background:#9fd7a7"></div>
<div style="left:1177px;top:1040px;width:48px;height:8px;background:#f4f7f9"></div>
<div style="left:1815px;top:1043px;font-size:12px;line-height:14px;font-weight:400;color:#202020;white-space:nowrap;">5:40 AM</div>
</body></html>
